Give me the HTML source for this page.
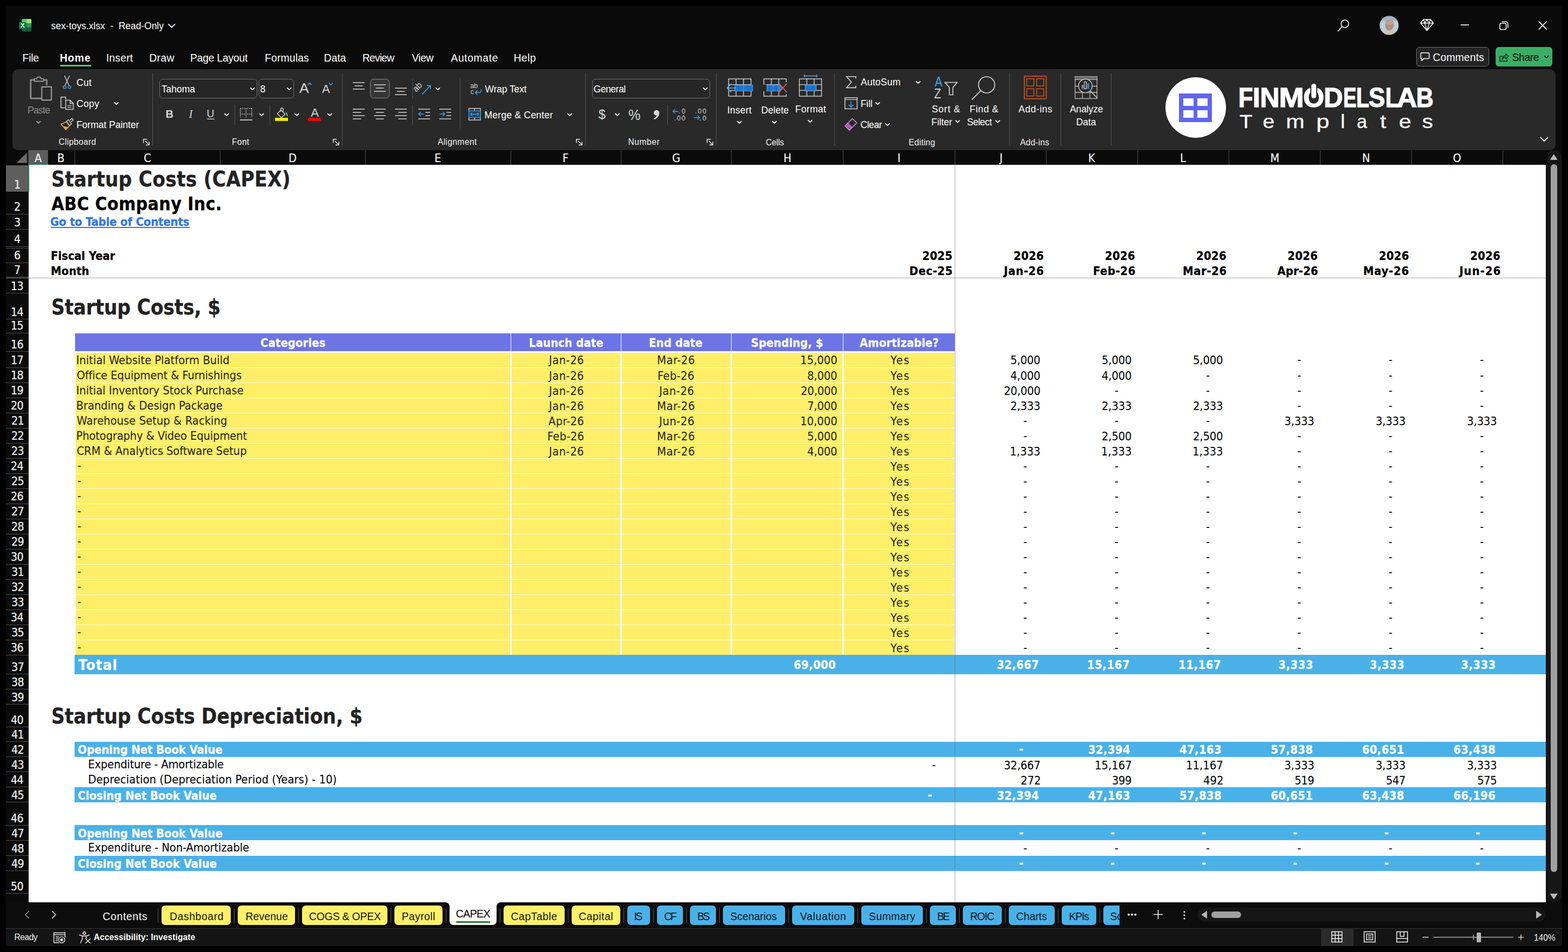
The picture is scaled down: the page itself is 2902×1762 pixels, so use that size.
<!DOCTYPE html>
<html lang="en">
<head>
<meta charset="utf-8">
<title>sex-toys.xlsx - Read-Only - Excel</title>
<style>
html,body{margin:0;padding:0;background:#000;}
body{width:2902px;height:1762px;position:relative;overflow:hidden;font-family:"Liberation Sans",sans-serif;}
#app{position:absolute;left:0;top:0;width:2902px;height:1762px;overflow:hidden;}
#app div,#app svg,#app .t{position:absolute;}
.t{white-space:pre;margin:0;padding:0;display:block;font-kerning:normal;font-weight:400;text-decoration:none;transform-origin:0 0;}
svg{overflow:visible;}
.g{display:inline-block;width:0;transform-origin:0 0;white-space:pre;}

</style>
</head>
<body>
<div id="app">
<div style="left:11px;top:11px;width:2880px;height:1740px;background:#0A0A0A;"></div>
<div style="left:53px;top:305px;width:2808px;height:1365px;background:#FFFFFF;"></div>
<div style="left:11px;top:278px;width:2850px;height:27px;background:#0A0A0A;"></div>
<div style="left:53px;top:278px;width:36px;height:26px;background:#5E5E5E;"></div>
<div style="left:88px;top:279px;width:1px;height:26px;background:#4D4D4D;"></div>
<div style="left:138px;top:279px;width:1px;height:26px;background:#4D4D4D;"></div>
<div style="left:407px;top:279px;width:1px;height:26px;background:#4D4D4D;"></div>
<div style="left:676px;top:279px;width:1px;height:26px;background:#4D4D4D;"></div>
<div style="left:945px;top:279px;width:1px;height:26px;background:#4D4D4D;"></div>
<div style="left:1149px;top:279px;width:1px;height:26px;background:#4D4D4D;"></div>
<div style="left:1353px;top:279px;width:1px;height:26px;background:#4D4D4D;"></div>
<div style="left:1560px;top:279px;width:1px;height:26px;background:#4D4D4D;"></div>
<div style="left:1767px;top:279px;width:1px;height:26px;background:#4D4D4D;"></div>
<div style="left:1936px;top:279px;width:1px;height:26px;background:#4D4D4D;"></div>
<div style="left:2105px;top:279px;width:1px;height:26px;background:#4D4D4D;"></div>
<div style="left:2274px;top:279px;width:1px;height:26px;background:#4D4D4D;"></div>
<div style="left:2443px;top:279px;width:1px;height:26px;background:#4D4D4D;"></div>
<div style="left:2612px;top:279px;width:1px;height:26px;background:#4D4D4D;"></div>
<div style="left:2781px;top:279px;width:1px;height:26px;background:#4D4D4D;"></div>
<div style="left:52px;top:279px;width:1px;height:26px;background:#4D4D4D;"></div>
<div style="left:11px;top:306px;width:42px;height:1364px;background:#0A0A0A;"></div>
<div style="left:11px;top:306px;width:42px;height:48px;background:#5E5E5E;"></div>
<div style="left:11px;top:354px;width:42px;height:1px;background:#4D4D4D;"></div>
<div style="left:11px;top:396px;width:42px;height:1px;background:#4D4D4D;"></div>
<div style="left:11px;top:424px;width:42px;height:1px;background:#4D4D4D;"></div>
<div style="left:11px;top:456px;width:42px;height:1px;background:#4D4D4D;"></div>
<div style="left:11px;top:486px;width:42px;height:1px;background:#4D4D4D;"></div>
<div style="left:11px;top:512px;width:42px;height:1px;background:#4D4D4D;"></div>
<div style="left:11px;top:542px;width:42px;height:1px;background:#4D4D4D;"></div>
<div style="left:11px;top:590px;width:42px;height:1px;background:#4D4D4D;"></div>
<div style="left:11px;top:616px;width:42px;height:1px;background:#4D4D4D;"></div>
<div style="left:11px;top:650px;width:42px;height:1px;background:#4D4D4D;"></div>
<div style="left:11px;top:680px;width:42px;height:1px;background:#4D4D4D;"></div>
<div style="left:11px;top:708px;width:42px;height:1px;background:#4D4D4D;"></div>
<div style="left:11px;top:736px;width:42px;height:1px;background:#4D4D4D;"></div>
<div style="left:11px;top:764px;width:42px;height:1px;background:#4D4D4D;"></div>
<div style="left:11px;top:792px;width:42px;height:1px;background:#4D4D4D;"></div>
<div style="left:11px;top:820px;width:42px;height:1px;background:#4D4D4D;"></div>
<div style="left:11px;top:848px;width:42px;height:1px;background:#4D4D4D;"></div>
<div style="left:11px;top:876px;width:42px;height:1px;background:#4D4D4D;"></div>
<div style="left:11px;top:904px;width:42px;height:1px;background:#4D4D4D;"></div>
<div style="left:11px;top:932px;width:42px;height:1px;background:#4D4D4D;"></div>
<div style="left:11px;top:960px;width:42px;height:1px;background:#4D4D4D;"></div>
<div style="left:11px;top:988px;width:42px;height:1px;background:#4D4D4D;"></div>
<div style="left:11px;top:1016px;width:42px;height:1px;background:#4D4D4D;"></div>
<div style="left:11px;top:1044px;width:42px;height:1px;background:#4D4D4D;"></div>
<div style="left:11px;top:1072px;width:42px;height:1px;background:#4D4D4D;"></div>
<div style="left:11px;top:1100px;width:42px;height:1px;background:#4D4D4D;"></div>
<div style="left:11px;top:1128px;width:42px;height:1px;background:#4D4D4D;"></div>
<div style="left:11px;top:1156px;width:42px;height:1px;background:#4D4D4D;"></div>
<div style="left:11px;top:1184px;width:42px;height:1px;background:#4D4D4D;"></div>
<div style="left:11px;top:1212px;width:42px;height:1px;background:#4D4D4D;"></div>
<div style="left:11px;top:1247px;width:42px;height:1px;background:#4D4D4D;"></div>
<div style="left:11px;top:1275px;width:42px;height:1px;background:#4D4D4D;"></div>
<div style="left:11px;top:1303px;width:42px;height:1px;background:#4D4D4D;"></div>
<div style="left:11px;top:1345px;width:42px;height:1px;background:#4D4D4D;"></div>
<div style="left:11px;top:1372px;width:42px;height:1px;background:#4D4D4D;"></div>
<div style="left:11px;top:1400px;width:42px;height:1px;background:#4D4D4D;"></div>
<div style="left:11px;top:1428px;width:42px;height:1px;background:#4D4D4D;"></div>
<div style="left:11px;top:1456px;width:42px;height:1px;background:#4D4D4D;"></div>
<div style="left:11px;top:1484px;width:42px;height:1px;background:#4D4D4D;"></div>
<div style="left:11px;top:1527px;width:42px;height:1px;background:#4D4D4D;"></div>
<div style="left:11px;top:1555px;width:42px;height:1px;background:#4D4D4D;"></div>
<div style="left:11px;top:1583px;width:42px;height:1px;background:#4D4D4D;"></div>
<div style="left:11px;top:1611px;width:42px;height:1px;background:#4D4D4D;"></div>
<div style="left:11px;top:1653px;width:42px;height:1px;background:#4D4D4D;"></div>
<div style="left:11px;top:459px;width:42px;height:1px;background:#4D4D4D;"></div>
<div style="left:11px;top:514px;width:42px;height:1px;background:#8A8A8A;"></div>
<div style="left:94px;top:420px;width:256.5px;height:1.7px;background:#2F76EC;"></div>
<div style="left:139.3px;top:617px;width:1627.7px;height:33px;background:#6D74E6;"></div>
<div style="left:944.7px;top:617px;width:1.6px;height:33px;background:#FFFFFF;"></div>
<div style="left:1148.7px;top:617px;width:1.6px;height:33px;background:#FFFFFF;"></div>
<div style="left:1352.7px;top:617px;width:1.6px;height:33px;background:#FFFFFF;"></div>
<div style="left:1559.7px;top:617px;width:1.6px;height:33px;background:#FFFFFF;"></div>
<div style="left:140px;top:653px;width:1626.3px;height:559.3px;background:#FFEF68;"></div>
<div style="left:140px;top:679.55px;width:1626.3px;height:1.6px;background:#FFFCE6;"></div>
<div style="left:140px;top:707.55px;width:1626.3px;height:1.6px;background:#FFFCE6;"></div>
<div style="left:140px;top:735.55px;width:1626.3px;height:1.6px;background:#FFFCE6;"></div>
<div style="left:140px;top:763.55px;width:1626.3px;height:1.6px;background:#FFFCE6;"></div>
<div style="left:140px;top:791.55px;width:1626.3px;height:1.6px;background:#FFFCE6;"></div>
<div style="left:140px;top:819.55px;width:1626.3px;height:1.6px;background:#FFFCE6;"></div>
<div style="left:140px;top:847.55px;width:1626.3px;height:1.6px;background:#FFFCE6;"></div>
<div style="left:140px;top:875.55px;width:1626.3px;height:1.6px;background:#FFFCE6;"></div>
<div style="left:140px;top:903.55px;width:1626.3px;height:1.6px;background:#FFFCE6;"></div>
<div style="left:140px;top:931.55px;width:1626.3px;height:1.6px;background:#FFFCE6;"></div>
<div style="left:140px;top:959.55px;width:1626.3px;height:1.6px;background:#FFFCE6;"></div>
<div style="left:140px;top:987.55px;width:1626.3px;height:1.6px;background:#FFFCE6;"></div>
<div style="left:140px;top:1015.55px;width:1626.3px;height:1.6px;background:#FFFCE6;"></div>
<div style="left:140px;top:1043.55px;width:1626.3px;height:1.6px;background:#FFFCE6;"></div>
<div style="left:140px;top:1071.55px;width:1626.3px;height:1.6px;background:#FFFCE6;"></div>
<div style="left:140px;top:1099.55px;width:1626.3px;height:1.6px;background:#FFFCE6;"></div>
<div style="left:140px;top:1127.55px;width:1626.3px;height:1.6px;background:#FFFCE6;"></div>
<div style="left:140px;top:1155.55px;width:1626.3px;height:1.6px;background:#FFFCE6;"></div>
<div style="left:140px;top:1183.55px;width:1626.3px;height:1.6px;background:#FFFCE6;"></div>
<div style="left:943.8px;top:651px;width:3.4px;height:561.3px;background:#FFFFFF;"></div>
<div style="left:1147.8px;top:651px;width:3.4px;height:561.3px;background:#FFFFFF;"></div>
<div style="left:1351.8px;top:651px;width:3.4px;height:561.3px;background:#FFFFFF;"></div>
<div style="left:1558.8px;top:651px;width:3.4px;height:561.3px;background:#FFFFFF;"></div>
<div style="left:138px;top:1212px;width:2723px;height:36px;background:#4AB1E8;"></div>
<div style="left:138px;top:1373px;width:2723px;height:28px;background:#4AB1E8;"></div>
<div style="left:138px;top:1457px;width:2723px;height:28.4px;background:#4AB1E8;"></div>
<div style="left:138px;top:1527.3px;width:2723px;height:27.7px;background:#4AB1E8;"></div>
<div style="left:138px;top:1583.6px;width:2723px;height:28px;background:#4AB1E8;"></div>
<div style="left:111px;top:120px;width:58px;height:3px;background:#5FC08C;border-radius:1.5px;"></div>
<div style="left:2621.3px;top:87.2px;width:134.7px;height:35.6px;background:#242424;border:1px solid #6E6E6E;border-radius:6px;box-sizing:border-box;"></div>
<div style="left:2768px;top:87.2px;width:105px;height:35.6px;background:#3BAE66;border-radius:6px;"></div>
<div style="left:23px;top:128px;width:2856px;height:149.8px;background:#292929;border-radius:11px;"></div>
<div style="left:282px;top:135px;width:1px;height:134px;background:#545454;"></div>
<div style="left:633px;top:135px;width:1px;height:134px;background:#545454;"></div>
<div style="left:1083px;top:135px;width:1px;height:134px;background:#545454;"></div>
<div style="left:1325px;top:135px;width:1px;height:134px;background:#545454;"></div>
<div style="left:1544px;top:135px;width:1px;height:134px;background:#545454;"></div>
<div style="left:1868px;top:135px;width:1px;height:134px;background:#545454;"></div>
<div style="left:1963px;top:135px;width:1px;height:134px;background:#545454;"></div>
<div style="left:2056px;top:135px;width:1px;height:134px;background:#545454;"></div>
<div style="left:434px;top:194px;width:1px;height:36.5px;background:#545454;"></div>
<div style="left:499px;top:194px;width:1px;height:36.5px;background:#545454;"></div>
<div style="left:763px;top:146px;width:1px;height:36px;background:#545454;"></div>
<div style="left:763px;top:194px;width:1px;height:36.5px;background:#545454;"></div>
<div style="left:851px;top:144px;width:1px;height:94px;background:#545454;"></div>
<div style="left:1235px;top:194px;width:1px;height:36.5px;background:#545454;"></div>
<div style="left:295px;top:146px;width:181px;height:36px;background:#262626;border:1px solid #707070;border-radius:6px;box-sizing:border-box;"></div>
<div style="left:479px;top:146px;width:65px;height:36px;background:#262626;border:1px solid #707070;border-radius:6px;box-sizing:border-box;"></div>
<div style="left:685px;top:146px;width:35.6px;height:36px;background:#363636;border:1px solid #8C8C8C;border-radius:6.500px;box-sizing:border-box;"></div>
<div style="left:1096px;top:146px;width:218px;height:36px;background:#262626;border:1px solid #707070;border-radius:6px;box-sizing:border-box;"></div>
<div style="left:2156.6px;top:142.9px;width:112px;height:112px;background:#FFFFFF;border-radius:50%;"></div>
<div style="left:2182px;top:173px;width:61px;height:52.8px;background:#6166F0;"></div>
<div style="left:2190px;top:181.7px;width:18.9px;height:14px;background:#FFFFFF;"></div>
<div style="left:2190px;top:203.5px;width:18.9px;height:14px;background:#FFFFFF;"></div>
<div style="left:2216.1px;top:181.7px;width:18.9px;height:14px;background:#FFFFFF;"></div>
<div style="left:2216.1px;top:203.5px;width:18.9px;height:14px;background:#FFFFFF;"></div>
<div style="left:820px;top:1669px;width:112px;height:12px;background:#FFFFFF;"></div>
<div style="left:11px;top:1670px;width:821px;height:48px;background:#0C0C0C;border-radius:0 8px 0 0;"></div>
<div style="left:919.2px;top:1670px;width:1971.8px;height:48px;background:#0C0C0C;border-radius:8px 0 0 0;"></div>
<div style="left:11px;top:1718px;width:2880px;height:33px;background:#141414;"></div>
<div style="left:11px;top:1717.5px;width:2880px;height:1px;background:#333333;"></div>
<div style="left:292px;top:1681px;width:1px;height:27px;background:#5A5A5A;"></div>
<div style="left:433px;top:1681px;width:1px;height:27px;background:#5A5A5A;"></div>
<div style="left:552px;top:1681px;width:1px;height:27px;background:#5A5A5A;"></div>
<div style="left:723px;top:1681px;width:1px;height:27px;background:#5A5A5A;"></div>
<div style="left:825px;top:1681px;width:1px;height:27px;background:#5A5A5A;"></div>
<div style="left:925px;top:1681px;width:1px;height:27px;background:#5A5A5A;"></div>
<div style="left:1051px;top:1681px;width:1px;height:27px;background:#5A5A5A;"></div>
<div style="left:1154px;top:1681px;width:1px;height:27px;background:#5A5A5A;"></div>
<div style="left:1209px;top:1681px;width:1px;height:27px;background:#5A5A5A;"></div>
<div style="left:1270px;top:1681px;width:1px;height:27px;background:#5A5A5A;"></div>
<div style="left:1331px;top:1681px;width:1px;height:27px;background:#5A5A5A;"></div>
<div style="left:1459px;top:1681px;width:1px;height:27px;background:#5A5A5A;"></div>
<div style="left:1587px;top:1681px;width:1px;height:27px;background:#5A5A5A;"></div>
<div style="left:1714px;top:1681px;width:1px;height:27px;background:#5A5A5A;"></div>
<div style="left:1775px;top:1681px;width:1px;height:27px;background:#5A5A5A;"></div>
<div style="left:1860px;top:1681px;width:1px;height:27px;background:#5A5A5A;"></div>
<div style="left:1958px;top:1681px;width:1px;height:27px;background:#5A5A5A;"></div>
<div style="left:2035px;top:1681px;width:1px;height:27px;background:#5A5A5A;"></div>
<div style="left:299px;top:1676px;width:128px;height:35.6px;background:#FFF06A;border-radius:6.500px;"></div>
<div style="left:440.3px;top:1676px;width:105.6px;height:35.6px;background:#FFF06A;border-radius:6.500px;"></div>
<div style="left:558.8px;top:1676px;width:158.3px;height:35.6px;background:#FFF06A;border-radius:6.500px;"></div>
<div style="left:729.7px;top:1676px;width:89.3px;height:35.6px;background:#FFF06A;border-radius:6.500px;"></div>
<div style="left:932px;top:1676px;width:112.6px;height:35.6px;background:#FFF06A;border-radius:6.500px;"></div>
<div style="left:1058px;top:1676px;width:90px;height:35.6px;background:#FFF06A;border-radius:6.500px;"></div>
<div style="left:1161px;top:1676px;width:42px;height:35.6px;background:#4AB1E8;border-radius:6.500px;"></div>
<div style="left:1216px;top:1676px;width:47.8px;height:35.6px;background:#4AB1E8;border-radius:6.500px;"></div>
<div style="left:1277px;top:1676px;width:47.7px;height:35.6px;background:#4AB1E8;border-radius:6.500px;"></div>
<div style="left:1338px;top:1676px;width:114.5px;height:35.6px;background:#4AB1E8;border-radius:6.500px;"></div>
<div style="left:1466px;top:1676px;width:115px;height:35.6px;background:#4AB1E8;border-radius:6.500px;"></div>
<div style="left:1593.8px;top:1676px;width:114.2px;height:35.6px;background:#4AB1E8;border-radius:6.500px;"></div>
<div style="left:1721px;top:1676px;width:48px;height:35.6px;background:#4AB1E8;border-radius:6.500px;"></div>
<div style="left:1782px;top:1676px;width:72px;height:35.6px;background:#4AB1E8;border-radius:6.500px;"></div>
<div style="left:1867px;top:1676px;width:84.7px;height:35.6px;background:#4AB1E8;border-radius:6.500px;"></div>
<div style="left:1965px;top:1676px;width:64px;height:35.6px;background:#4AB1E8;border-radius:6.500px;"></div>
<div style="left:2042px;top:1676px;width:30px;height:35.6px;background:#4AB1E8;border-radius:6.500px 0 0 6.500px;overflow:hidden;"><span class="t" style="left:12.500px;top:9px;font-size:19.4px;line-height:22px;color:#141414;letter-spacing:-0.300px">Sc</span></div>
<div style="left:832px;top:1669px;width:87.2px;height:43px;background:linear-gradient(#FFFFFF 0%,#FFFFFF 25%,#FFFBE8 100%);border-radius:0 0 7px 7px;"></div>
<div style="left:844px;top:1705px;width:63px;height:2.6px;background:#1E7B45;border-radius:1.300px;"></div>
<div style="left:2216.4px;top:1680px;width:644px;height:26px;background:#161616;border-radius:13px;"></div>
<div style="left:2241.6px;top:1687px;width:55.7px;height:12.4px;background:#A0A0A0;border-radius:6.200px;"></div>
<div style="left:2862.5px;top:278px;width:27px;height:1392px;background:#161616;border-radius:13px;"></div>
<div style="left:2870px;top:303.5px;width:12.2px;height:1310.5px;background:#A0A0A0;border-radius:6.100px;"></div>
<div style="left:2445px;top:1718.5px;width:60px;height:32.5px;background:#2B2B2B;"></div>
<div style="left:2733px;top:1726px;width:8px;height:17.5px;background:#B4B4B4;border-radius:1.500px;"></div>
<svg style="left:30px;top:282px;" width="20" height="20" viewBox="0 0 20 20"><path d="M20 0.5V19.5H0.5Z" fill="#6B6B6B"/></svg>
<div style="left:52px;top:303.6px;width:37.5px;height:1.9px;background:#1F7A47;"></div>
<div style="left:52px;top:304px;width:1.8px;height:51px;background:#1F7A47;"></div>
<svg style="left:0;top:0" width="2902" height="1762" viewBox="0 0 2902 1762"><g>
<rect x="40.5" y="35" width="17.6" height="23.4" rx="2.2" fill="#185C37"/>
<path d="M40.5 37.2a2.2 2.2 0 0 1 2.2-2.2h6.6v8.2h-8.8z" fill="#5FCB6A"/>
<path d="M49.3 35h6.6a2.2 2.2 0 0 1 2.2 2.2v6h-8.8z" fill="#A6E36E"/>
<rect x="49.3" y="43.2" width="8.8" height="7.6" fill="#2E9A55"/>
<rect x="40.5" y="43.2" width="8.8" height="7.6" fill="#1E7A45"/>
<rect x="35.4" y="40.8" width="13.2" height="13.2" rx="1.6" fill="#107C41"/>
</g>
<polyline points="311.81,44.84 317.75,50.69 323.69,44.84" fill="none" stroke="#FFFFFF" stroke-width="1.8" stroke-linecap="round" stroke-linejoin="round"/>
<circle cx="2489" cy="44" r="7" fill="none" stroke="#fff" stroke-width="1.6"/><path d="M2484 49.3L2476.6 57.4" stroke="#fff" stroke-width="1.7" stroke-linecap="round"/>
<defs><clipPath id="av"><circle cx="2571" cy="47" r="18"/></clipPath></defs>
<g clip-path="url(#av)"><rect x="2553" y="29" width="36" height="36" fill="#B9CFD6"/>
<rect x="2553" y="29" width="36" height="10" fill="#9FB4C8"/>
<ellipse cx="2571.5" cy="46" rx="8" ry="10.5" fill="#B08F7C"/>
<ellipse cx="2571.5" cy="41" rx="7.5" ry="5.5" fill="#BFA190"/>
<path d="M2555 66c2-7 8-9 16.5-9s14.5 2 16.500 9z" fill="#CFC6B8"/>
</g><circle cx="2571" cy="47" r="18" fill="none" stroke="#1a1a1a" stroke-width="1"/>
<path d="M2634.500 36h13l5.300 6.800-11.800 13.800-11.800-13.800zM2629.400 42.800h23.400M2636.800 42.800l4.200 13.600 4.200-13.600M2634.500 36l2.400 6.800 4.100-6.800 4.100 6.800 2.400-6.800" fill="none" stroke="#fff" stroke-width="1.5" stroke-linejoin="round"/>
<path d="M2703.400 46h15.500" stroke="#fff" stroke-width="1.6"/>
<rect x="2776" y="43" width="11.500" height="11.500" rx="2.600" fill="none" stroke="#fff" stroke-width="1.6"/><path d="M2779.500 40.200h7.200a4 4 0 0 1 4 4v7.300" fill="none" stroke="#fff" stroke-width="1.6"/>
<path d="M2847.600 39.600l15 15M2862.600 39.600l-15 15" stroke="#fff" stroke-width="1.6"/>
<path d="M2630.500 97.800h13.500a1 1 0 0 1 1 1v8.600a1 1 0 0 1-1 1h-8.800l-4 3.800v-3.800h-0.700a1 1 0 0 1-1-1v-8.600a1 1 0 0 1 1-1z" fill="none" stroke="#fff" stroke-width="1.5" stroke-linejoin="round"/>
<path d="M2780.800 104.300h-4.800v9h13.200v-3.400" fill="none" stroke="#0b2a17" stroke-width="1.500" stroke-linejoin="round"/><path d="M2780.300 110.300c0.400-4.600 2.600-7.200 6.600-7.500v-3.400l4.800 4.800-4.800 4.800v-3.300c-2.800 0-4.800 1.500-6.600 4.600z" fill="none" stroke="#0b2a17" stroke-width="1.400" stroke-linejoin="round"/>
<polyline points="2858.76,103.71 2862.25,107.235 2865.74,103.71" fill="none" stroke="#0A0A0A" stroke-width="1.7" stroke-linecap="round" stroke-linejoin="round"/>
<path d="M272.3 257.8H265.6V264.5" fill="none" stroke="#E8E8E8" stroke-width="1.5"/><path d="M268.8 261L275.8 268M276.1 262.2V268.3H270" fill="none" stroke="#E8E8E8" stroke-width="1.5"/>
<path d="M623.4 257.8H616.7V264.5" fill="none" stroke="#E8E8E8" stroke-width="1.5"/><path d="M619.9 261L626.9 268M627.2 262.2V268.3H621.1" fill="none" stroke="#E8E8E8" stroke-width="1.5"/>
<path d="M1073.5 257.8H1066.8V264.5" fill="none" stroke="#E8E8E8" stroke-width="1.5"/><path d="M1070 261L1077 268M1077.3 262.2V268.3H1071.2" fill="none" stroke="#E8E8E8" stroke-width="1.5"/>
<path d="M1315.5 257.8H1308.8V264.5" fill="none" stroke="#E8E8E8" stroke-width="1.5"/><path d="M1312 261L1319 268M1319.3 262.2V268.3H1313.2" fill="none" stroke="#E8E8E8" stroke-width="1.5"/>
<g fill="none" stroke-linejoin="round">
<path d="M63.500 147.800h-6.700v34.400h20" stroke="#8E8E8E" stroke-width="2.800"/>
<path d="M80 147.800h6.300v10" stroke="#8E8E8E" stroke-width="2.800"/>
<path d="M63.500 150.500v-4.800h4.300a4.300 4.300 0 0 1 8.400 0h4.300v4.800z" stroke="#9A9A9A" stroke-width="1.800"/>
<rect x="77.300" y="160.800" width="17.800" height="24.400" fill="#292929" stroke="#A6A6A6" stroke-width="1.900"/>
</g>
<polyline points="67.81,224.54 71.35,227.99 74.89,224.54" fill="none" stroke="#8C8C8C" stroke-width="1.8" stroke-linecap="round" stroke-linejoin="round"/>
<g fill="none">
<path d="M119.600 140.500L127.400 157.500M128.400 140.500L120.600 157.500" stroke="#D6D6D6" stroke-width="1.400" stroke-linecap="round"/>
<circle cx="119.500" cy="161.200" r="2.500" stroke="#3C9BE3" stroke-width="1.600"/><circle cx="128.500" cy="161.200" r="2.500" stroke="#3C9BE3" stroke-width="1.600"/>
</g>
<g fill="none" stroke="#D6D6D6" stroke-width="1.500" stroke-linejoin="round">
<path d="M121.500 184.500v-4.700h-8.700v19.600h7.500"/>
<path d="M121.600 185.600h8.200l5.800 5.800v11.200h-14z"/><path d="M129.800 185.600v5.800h5.800"/>
<path d="M125 195.400h7.300M125 198.600h7.300" stroke-width="1.300"/>
</g>
<polyline points="211.81,189.84 215.3,193.19 218.79,189.84" fill="none" stroke="#FFFFFF" stroke-width="1.8" stroke-linecap="round" stroke-linejoin="round"/>
<g stroke-linejoin="round">
<path d="M129 222.500l4.300-3.300 2.300 3-4.300 3.400" fill="none" stroke="#D6D6D6" stroke-width="1.400"/>
<path d="M122.500 224.800l4-3 5.800 7.600-4 3z" fill="none" stroke="#D6D6D6" stroke-width="1.400"/>
<path d="M112.800 229.700l10.800-4.300 5.300 7-7 7.400z" fill="none" stroke="#F2B64B" stroke-width="1.500"/>
<path d="M116.700 234l9.700 1.800-5 4.700z" fill="#E9A13B" stroke="#E9A13B" stroke-width="1"/>
</g>
<polyline points="463.81,162.84 467.25,166.19 470.69,162.84" fill="none" stroke="#FFFFFF" stroke-width="1.8" stroke-linecap="round" stroke-linejoin="round"/>
<polyline points="531.81,162.84 535.25,166.19 538.69,162.84" fill="none" stroke="#FFFFFF" stroke-width="1.8" stroke-linecap="round" stroke-linejoin="round"/>
<polyline points="569.500,157.300 573,153.600 576.500,157.300" fill="none" stroke="#3C9BE3" stroke-width="1.700"/>
<polyline points="608.800,153.600 612.300,157.300 615.800,153.600" fill="none" stroke="#3C9BE3" stroke-width="1.700"/>
<path d="M383.2 220.3H397" stroke="#D6D6D6" stroke-width="1.4"/>
<polyline points="415.71,210.54 419.3,213.89 422.89,210.54" fill="none" stroke="#FFFFFF" stroke-width="1.8" stroke-linecap="round" stroke-linejoin="round"/>
<g fill="none" stroke="#D6D6D6">
<path d="M444.800 200.700H466.200M444.800 200.700V217.500M466.200 200.700V217.500M455.500 200.700V217.500M444.800 211.300H466.200" stroke-width="1.500" stroke-dasharray="1.500 1.700"/>
<path d="M444 222H467" stroke-width="1.700"/></g>
<polyline points="480.61,210.54 484.25,213.89 487.89,210.54" fill="none" stroke="#FFFFFF" stroke-width="1.8" stroke-linecap="round" stroke-linejoin="round"/>
<g fill="none" stroke-linejoin="round">
<path d="M519.800 203.400l8 8-7.200 6.300-7.300-7.300z" stroke="#D6D6D6" stroke-width="1.400"/>
<path d="M519.500 206.500v-4.200a2.300 2.300 0 0 1 4.600 0v4.800" stroke="#D6D6D6" stroke-width="1.300"/>
<path d="M528.500 208.500c2.300 1 3.300 3.300 2.800 6.700" stroke="#6FB7F0" stroke-width="1.800"/></g>
<rect x="509" y="218" width="24" height="5.800" fill="#FFF100"/>
<polyline points="545.71,210.54 549.25,213.89 552.79,210.54" fill="none" stroke="#FFFFFF" stroke-width="1.8" stroke-linecap="round" stroke-linejoin="round"/>
<rect x="570" y="218" width="24" height="5.800" fill="#FF0000"/>
<polyline points="606.81,210.54 610.4,213.89 613.99,210.54" fill="none" stroke="#FFFFFF" stroke-width="1.8" stroke-linecap="round" stroke-linejoin="round"/>
<path d="M653 152.9H674.8" stroke="#D6D6D6" stroke-width="1.5"/><path d="M656.6 158.9H671.2" stroke="#D6D6D6" stroke-width="1.5"/><path d="M653 164.9H674.8" stroke="#D6D6D6" stroke-width="1.5"/>
<path d="M692 157H714" stroke="#D6D6D6" stroke-width="1.5"/><path d="M695.6 163H710.4" stroke="#D6D6D6" stroke-width="1.5"/><path d="M692 169H714" stroke="#D6D6D6" stroke-width="1.5"/>
<path d="M731 163.2H752.8" stroke="#D6D6D6" stroke-width="1.5"/><path d="M734.6 169.2H749.2" stroke="#D6D6D6" stroke-width="1.5"/><path d="M731 175.2H752.8" stroke="#D6D6D6" stroke-width="1.5"/>
<path d="M653 202H674.8" stroke="#D6D6D6" stroke-width="1.5"/><path d="M653 208H668.6" stroke="#D6D6D6" stroke-width="1.5"/><path d="M653 214H674.8" stroke="#D6D6D6" stroke-width="1.5"/><path d="M653 220H668.6" stroke="#D6D6D6" stroke-width="1.5"/>
<path d="M692 202H714" stroke="#D6D6D6" stroke-width="1.5"/><path d="M695.6 208H710.4" stroke="#D6D6D6" stroke-width="1.5"/><path d="M692 214H714" stroke="#D6D6D6" stroke-width="1.5"/><path d="M695.6 220H710.4" stroke="#D6D6D6" stroke-width="1.5"/>
<path d="M731 202H752.8" stroke="#D6D6D6" stroke-width="1.5"/><path d="M737.2 208H752.8" stroke="#D6D6D6" stroke-width="1.5"/><path d="M731 214H752.8" stroke="#D6D6D6" stroke-width="1.5"/><path d="M737.2 220H752.8" stroke="#D6D6D6" stroke-width="1.5"/>
<path d="M774 202H796" stroke="#D6D6D6" stroke-width="1.5"/><path d="M787.4 208H796" stroke="#D6D6D6" stroke-width="1.5"/><path d="M787.4 214H796" stroke="#D6D6D6" stroke-width="1.5"/><path d="M774 220H796" stroke="#D6D6D6" stroke-width="1.5"/>
<path d="M775 211H784.600M779 207l-4 4 4 4" fill="none" stroke="#3C9BE3" stroke-width="1.700"/>
<path d="M813 202H835" stroke="#D6D6D6" stroke-width="1.5"/><path d="M826.4 208H835" stroke="#D6D6D6" stroke-width="1.5"/><path d="M826.4 214H835" stroke="#D6D6D6" stroke-width="1.5"/><path d="M813 220H835" stroke="#D6D6D6" stroke-width="1.5"/>
<path d="M813.500 211H823.300M819.300 207l4 4-4 4" fill="none" stroke="#3C9BE3" stroke-width="1.700"/>
<path d="M781.500 174.300L796.300 158.600M789.800 158.300h6.800v6.800" fill="none" stroke="#3C9BE3" stroke-width="1.700"/>
<polyline points="806.81,162.84 810.3,166.19 813.79,162.84" fill="none" stroke="#FFFFFF" stroke-width="1.8" stroke-linecap="round" stroke-linejoin="round"/>
<path d="M890.500 165.300v2.500a3.400 3.400 0 0 1-3.400 3.400h-7.300M883.600 167.300l-3.900 3.900 3.900 3.900" fill="none" stroke="#3C9BE3" stroke-width="1.700"/>
<rect x="867.700" y="200.700" width="21.400" height="21.400" fill="none" stroke="#D6D6D6" stroke-width="1.400"/>
<path d="M878.400 200.700v4.500M878.400 217.600v4.500" stroke="#D6D6D6" stroke-width="1.400"/>
<rect x="867.700" y="205.200" width="21.400" height="12.400" fill="#2B3F55" stroke="#3C9BE3" stroke-width="1.400"/>
<path d="M871 211.400h14.800M874 208.400l-3 3 3 3M882.800 208.400l3 3-3 3" fill="none" stroke="#3C9BE3" stroke-width="1.500"/>
<polyline points="1050.81,210.54 1054.45,213.89 1058.09,210.54" fill="none" stroke="#FFFFFF" stroke-width="1.8" stroke-linecap="round" stroke-linejoin="round"/>
<polyline points="1301.81,162.84 1305.3,166.19 1308.79,162.84" fill="none" stroke="#FFFFFF" stroke-width="1.8" stroke-linecap="round" stroke-linejoin="round"/>
<polyline points="1138.81,210.54 1142.5,213.89 1146.19,210.54" fill="none" stroke="#FFFFFF" stroke-width="1.8" stroke-linecap="round" stroke-linejoin="round"/>
<path d="M1215 203.700a5.200 5.200 0 0 1 5.300 5.400c0 5.400-3.600 10-9.600 12.300l-0.900-1.700c3-1.500 4.900-3.600 5.500-5.900a4.800 4.800 0 0 1-5.300-4.800 5 5 0 0 1 5-5.300z" fill="#D6D6D6"/>
<path d="M1245.500 206.200H1256M1249.500 202.300l-3.900 3.900 3.900 3.900" fill="none" stroke="#3C9BE3" stroke-width="1.600"/>
<path d="M1284.300 217.800H1294.800M1290.800 213.900l3.900 3.900-3.900 3.900" fill="none" stroke="#3C9BE3" stroke-width="1.600"/>
<g fill="none" stroke="#D6D6D6" stroke-width="1.400"><rect x="1348.5" y="146" width="41.5" height="32"/><path d="M1362.33 146v32M1376.17 146v32M1348.5 156.667h41.5M1348.5 167.333h41.5"/></g>
<rect x="1360" y="157.300" width="33" height="11" fill="#1B74C9" stroke="#57A9EC" stroke-width="1"/>
<path d="M1376.500 157.300v11" stroke="#57A9EC" stroke-width="1"/>
<path d="M1346 162.800h16.500M1353.500 154.800l-8 8 8 8" fill="none" stroke="#57A9EC" stroke-width="1.700"/>
<polyline points="1364.81,224.54 1368.35,227.99 1371.89,224.54" fill="none" stroke="#FFFFFF" stroke-width="1.8" stroke-linecap="round" stroke-linejoin="round"/>
<g fill="none" stroke="#D6D6D6" stroke-width="1.400"><rect x="1413.7" y="146" width="41.5" height="32"/><path d="M1427.53 146v32M1441.37 146v32M1413.7 156.667h41.5M1413.7 167.333h41.5"/></g>
<rect x="1412.500" y="156.500" width="6" height="12.500" fill="#292929"/><rect x="1442" y="152" width="16" height="22" fill="#292929"/>
<rect x="1419.500" y="157.300" width="23" height="11" fill="#1B74C9" stroke="#57A9EC" stroke-width="1"/>
<path d="M1431 157.300v11" stroke="#57A9EC" stroke-width="1"/>
<path d="M1442.500 157.300l5 5.500-5 5.500z" fill="#1B74C9" stroke="#57A9EC" stroke-width="1"/>
<path d="M1441.500 154.500l15 16.500M1456.500 154.500l-15 16.500" stroke="#E5574F" stroke-width="1.800"/>
<polyline points="1429.61,224.54 1433.15,227.99 1436.69,224.54" fill="none" stroke="#FFFFFF" stroke-width="1.8" stroke-linecap="round" stroke-linejoin="round"/>
<g fill="none" stroke="#D6D6D6" stroke-width="1.400"><rect x="1479.5" y="146" width="41" height="32"/><path d="M1493.17 146v32M1506.83 146v32M1479.5 156.667h41M1479.5 167.333h41"/></g>
<rect x="1490.500" y="157" width="20" height="11" fill="#1B74C9" stroke="#57A9EC" stroke-width="1.300"/>
<path d="M1488.500 140.500h23M1488.500 138v5M1511.500 138v5" stroke="#57A9EC" stroke-width="1.600" fill="none"/>
<polyline points="1495.81,222.54 1499.3,226.19 1502.79,222.54" fill="none" stroke="#FFFFFF" stroke-width="1.8" stroke-linecap="round" stroke-linejoin="round"/>
<path d="M1584 145.500v-3.700h-17.200l9 10.300-9 10.300h17.200v-3.700" fill="none" stroke="#D6D6D6" stroke-width="1.600" stroke-linejoin="miter"/>
<polyline points="1695.71,150.84 1699.25,154.19 1702.79,150.84" fill="none" stroke="#FFFFFF" stroke-width="1.8" stroke-linecap="round" stroke-linejoin="round"/>
<rect x="1563.800" y="180.800" width="22.600" height="20.600" fill="none" stroke="#D6D6D6" stroke-width="1.500"/>
<path d="M1563.800 184.300h22.600" stroke="#D6D6D6" stroke-width="1.300"/>
<path d="M1575 187.500v10.500M1570.500 193.800l4.500 4.500 4.500-4.500" fill="none" stroke="#3C9BE3" stroke-width="1.700"/>
<polyline points="1620.81,189.84 1624.4,193.19 1627.99,189.84" fill="none" stroke="#FFFFFF" stroke-width="1.8" stroke-linecap="round" stroke-linejoin="round"/>
<path d="M1577.500 219.500l8 8-13.500 13.500-8-8z" fill="none" stroke="#D68BE0" stroke-width="1.600" stroke-linejoin="round"/>
<path d="M1569 228l8 8-5 5-8-8z" fill="#B14CC4" stroke="#D68BE0" stroke-width="1.200" stroke-linejoin="round"/>
<polyline points="1638.81,228.84 1642.5,232.19 1646.19,228.84" fill="none" stroke="#FFFFFF" stroke-width="1.8" stroke-linecap="round" stroke-linejoin="round"/>
<path d="M1749 152.500h22.500l-8 9.500v13.500h-6.500v-13.500z" fill="none" stroke="#D6D6D6" stroke-width="1.700" stroke-linejoin="miter"/>
<polyline points="1768.81,223.14 1772.3,226.49 1775.79,223.14" fill="none" stroke="#FFFFFF" stroke-width="1.8" stroke-linecap="round" stroke-linejoin="round"/>
<circle cx="1826" cy="157" r="15" fill="none" stroke="#D6D6D6" stroke-width="1.700"/><path d="M1815.300 167.700L1799 184.200" stroke="#D6D6D6" stroke-width="1.900" stroke-linecap="round"/>
<polyline points="1842.81,223.14 1846.5,226.49 1850.19,223.14" fill="none" stroke="#FFFFFF" stroke-width="1.8" stroke-linecap="round" stroke-linejoin="round"/>
<g fill="none" stroke="#C8511F"><rect x="1895.800" y="141" width="40.600" height="41.800" stroke-width="1.800"/>
<rect x="1900.300" y="145.700" width="13.200" height="13.400" stroke-width="1.600"/><rect x="1918.600" y="145.700" width="13.200" height="13.400" stroke-width="1.600"/>
<rect x="1900.300" y="164.300" width="13.200" height="13.400" stroke-width="1.600"/><rect x="1918.600" y="164.300" width="13.200" height="13.400" stroke-width="1.600"/></g>
<g fill="none" stroke="#BDBDBD" stroke-width="1.300">
<rect x="1989.700" y="141.700" width="40.700" height="40.700"/>
<path d="M1989.700 147.300h40.700M1989.700 159.500h40.700M1989.700 171h40.700M2003.300 171v11.400M2017 171v11.400"/>
</g><rect x="1990.300" y="142.300" width="39.500" height="4.600" fill="#6E6E6E"/>
<circle cx="2008.700" cy="159" r="12.600" fill="#292929" stroke="#C8C8C8" stroke-width="1.500"/>
<path d="M2017.800 168l12.600 13.200" stroke="#C8C8C8" stroke-width="1.700"/>
<rect x="2001.800" y="157" width="3.600" height="7.300" fill="#8A8A8A"/><rect x="2006.900" y="151.300" width="3.600" height="13" fill="none" stroke="#E8E8E8" stroke-width="1.100"/><rect x="2012" y="154.200" width="3.600" height="10.100" fill="#2D8CDA"/>
<polyline points="2851.31,254.54 2857.9,260.99 2864.49,254.54" fill="none" stroke="#FFFFFF" stroke-width="1.8" stroke-linecap="round" stroke-linejoin="round"/>
<polyline points="53.800,1686.200 47,1693 53.800,1699.800" fill="none" stroke="#8A8A8A" stroke-width="1.700"/>
<polyline points="96.300,1686.200 103.100,1693 96.300,1699.800" fill="none" stroke="#C8C8C8" stroke-width="1.700"/>
<circle cx="2089" cy="1692.800" r="2.100" fill="#F0F0F0"/>
<circle cx="2095.1" cy="1692.800" r="2.100" fill="#F0F0F0"/>
<circle cx="2101.2" cy="1692.800" r="2.100" fill="#F0F0F0"/>
<path d="M2135 1692.500h17M2143.500 1684v17" stroke="#F0F0F0" stroke-width="1.700"/>
<rect x="2190.600" y="1686.5" width="2.700" height="2.700" fill="#F0F0F0"/>
<rect x="2190.600" y="1692.6" width="2.700" height="2.700" fill="#F0F0F0"/>
<rect x="2190.600" y="1698.7" width="2.700" height="2.700" fill="#F0F0F0"/>
<path d="M2233.500 1686.500v13l-9.500-6.500z" fill="#B8B8B8" stroke="#B8B8B8" stroke-width="1" stroke-linejoin="round"/>
<path d="M2843.500 1686.500v13l9.500-6.500z" fill="#B8B8B8" stroke="#B8B8B8" stroke-width="1" stroke-linejoin="round"/>
<path d="M2869.500 295.500h12.500l-6.250-9.500z" fill="#B8B8B8" stroke="#B8B8B8" stroke-width="1" stroke-linejoin="round"/>
<path d="M2869.500 1654.500h12.500l-6.250 9.500z" fill="#B8B8B8" stroke="#B8B8B8" stroke-width="1" stroke-linejoin="round"/>
<g fill="none" stroke="#F0F0F0" stroke-width="1.400">
<path d="M120.300 1735v-8.500h-20.600v18.300h9.500"/><path d="M99.700 1730h20.600"/>
<path d="M103 1734h6M103 1737.500h4.500M103 1741h4"/>
<circle cx="114.200" cy="1739.500" r="5.600"/></g><circle cx="114.200" cy="1739.500" r="2.600" fill="#F0F0F0"/>
<g fill="none" stroke="#F0F0F0" stroke-width="1.500" stroke-linecap="round" stroke-linejoin="round">
<circle cx="156" cy="1727.200" r="2.400"/>
<path d="M147 1730.500c3 1.500 6 2 9 2s6-0.500 9-2M152.500 1732.500v5.500l-3.500 7M159.500 1732.500v4"/>
<path d="M158.500 1737.500l8.500 8M167 1737.500l-8.500 8"/></g>
<g fill="none" stroke="#F4F4F4" stroke-width="1.500">
<rect x="2464.700" y="1724.500" width="19" height="19"/><path d="M2471 1724.500v19M2477.400 1724.500v19M2464.700 1730.800h19M2464.700 1737.200h19"/>
<rect x="2524.700" y="1724.500" width="20.400" height="19"/><rect x="2529.300" y="1728.700" width="11.200" height="10.600"/><path d="M2532 1732.300h6M2532 1735.700h6"/>
<rect x="2585" y="1724.500" width="20" height="19"/><path d="M2585 1737h20M2591.500 1724.500v8.500h7v-8.500"/></g>
<path d="M2633 1734.600h11" stroke="#E0E0E0" stroke-width="1.400"/>
<path d="M2653 1734.600h148" stroke="#C8C8C8" stroke-width="1.200"/><path d="M2727 1730v9.500" stroke="#C8C8C8" stroke-width="1.300"/>
<path d="M2809.700 1734.600h10.400M2814.900 1729.400v10.400" stroke="#E0E0E0" stroke-width="1.400"/></svg>
<span class="t" style="left:64.11px;top:281.00px;font-size:20.5px;line-height:24px;color:#F4F4F4;font-family:'DejaVu Sans Condensed', 'DejaVu Sans', 'Liberation Sans', sans-serif;transform:scaleX(1.06);-webkit-text-stroke:0.2px;">A</span>
<span class="t" style="left:106.33px;top:281.00px;font-size:20.5px;line-height:24px;color:#F4F4F4;font-family:'DejaVu Sans Condensed', 'DejaVu Sans', 'Liberation Sans', sans-serif;transform:scaleX(1.06);-webkit-text-stroke:0.2px;">B</span>
<span class="t" style="left:266.11px;top:281.00px;font-size:20.5px;line-height:24px;color:#F4F4F4;font-family:'DejaVu Sans Condensed', 'DejaVu Sans', 'Liberation Sans', sans-serif;transform:scaleX(1.06);-webkit-text-stroke:0.2px;">C</span>
<span class="t" style="left:534.05px;top:281.00px;font-size:20.5px;line-height:24px;color:#F4F4F4;font-family:'DejaVu Sans Condensed', 'DejaVu Sans', 'Liberation Sans', sans-serif;transform:scaleX(1.06);-webkit-text-stroke:0.2px;">D</span>
<span class="t" style="left:804.11px;top:281.00px;font-size:20.5px;line-height:24px;color:#F4F4F4;font-family:'DejaVu Sans Condensed', 'DejaVu Sans', 'Liberation Sans', sans-serif;transform:scaleX(1.06);-webkit-text-stroke:0.2px;">E</span>
<span class="t" style="left:1041.14px;top:281.00px;font-size:20.5px;line-height:24px;color:#F4F4F4;font-family:'DejaVu Sans Condensed', 'DejaVu Sans', 'Liberation Sans', sans-serif;transform:scaleX(1.06);-webkit-text-stroke:0.2px;">F</span>
<span class="t" style="left:1244.08px;top:281.00px;font-size:20.5px;line-height:24px;color:#F4F4F4;font-family:'DejaVu Sans Condensed', 'DejaVu Sans', 'Liberation Sans', sans-serif;transform:scaleX(1.06);-webkit-text-stroke:0.2px;">G</span>
<span class="t" style="left:1449.58px;top:281.00px;font-size:20.5px;line-height:24px;color:#F4F4F4;font-family:'DejaVu Sans Condensed', 'DejaVu Sans', 'Liberation Sans', sans-serif;transform:scaleX(1.06);-webkit-text-stroke:0.2px;">H</span>
<span class="t" style="left:1660.82px;top:281.00px;font-size:20.5px;line-height:24px;color:#F4F4F4;font-family:'DejaVu Sans Condensed', 'DejaVu Sans', 'Liberation Sans', sans-serif;transform:scaleX(1.06);-webkit-text-stroke:0.2px;">I</span>
<span class="t" style="left:1850.41px;top:281.00px;font-size:20.5px;line-height:24px;color:#F4F4F4;font-family:'DejaVu Sans Condensed', 'DejaVu Sans', 'Liberation Sans', sans-serif;transform:scaleX(1.06);-webkit-text-stroke:0.2px;">J</span>
<span class="t" style="left:2013.58px;top:281.00px;font-size:20.5px;line-height:24px;color:#F4F4F4;font-family:'DejaVu Sans Condensed', 'DejaVu Sans', 'Liberation Sans', sans-serif;transform:scaleX(1.06);-webkit-text-stroke:0.2px;">K</span>
<span class="t" style="left:2183.64px;top:281.00px;font-size:20.5px;line-height:24px;color:#F4F4F4;font-family:'DejaVu Sans Condensed', 'DejaVu Sans', 'Liberation Sans', sans-serif;transform:scaleX(1.06);-webkit-text-stroke:0.2px;">L</span>
<span class="t" style="left:2350.52px;top:281.00px;font-size:20.5px;line-height:24px;color:#F4F4F4;font-family:'DejaVu Sans Condensed', 'DejaVu Sans', 'Liberation Sans', sans-serif;transform:scaleX(1.06);-webkit-text-stroke:0.2px;">M</span>
<span class="t" style="left:2520.58px;top:281.00px;font-size:20.5px;line-height:24px;color:#F4F4F4;font-family:'DejaVu Sans Condensed', 'DejaVu Sans', 'Liberation Sans', sans-serif;transform:scaleX(1.06);-webkit-text-stroke:0.2px;">N</span>
<span class="t" style="left:2689.05px;top:281.00px;font-size:20.5px;line-height:24px;color:#F4F4F4;font-family:'DejaVu Sans Condensed', 'DejaVu Sans', 'Liberation Sans', sans-serif;transform:scaleX(1.06);-webkit-text-stroke:0.2px;">O</span>
<span class="t" style="left:25.96px;top:330.00px;font-size:20.5px;line-height:24px;color:#F4F4F4;font-family:'DejaVu Sans Condensed', 'DejaVu Sans', 'Liberation Sans', sans-serif;letter-spacing:-0.700px;transform:scaleX(1.04);-webkit-text-stroke:0.2px;">1</span>
<span class="t" style="left:26.48px;top:371.00px;font-size:20.5px;line-height:24px;color:#F4F4F4;font-family:'DejaVu Sans Condensed', 'DejaVu Sans', 'Liberation Sans', sans-serif;letter-spacing:-0.700px;transform:scaleX(1.04);-webkit-text-stroke:0.2px;">2</span>
<span class="t" style="left:26.48px;top:400.00px;font-size:20.5px;line-height:24px;color:#F4F4F4;font-family:'DejaVu Sans Condensed', 'DejaVu Sans', 'Liberation Sans', sans-serif;letter-spacing:-0.700px;transform:scaleX(1.04);-webkit-text-stroke:0.2px;">3</span>
<span class="t" style="left:25.96px;top:431.00px;font-size:20.5px;line-height:24px;color:#F4F4F4;font-family:'DejaVu Sans Condensed', 'DejaVu Sans', 'Liberation Sans', sans-serif;letter-spacing:-0.700px;transform:scaleX(1.04);-webkit-text-stroke:0.2px;">4</span>
<span class="t" style="left:25.96px;top:461.00px;font-size:20.5px;line-height:24px;color:#F4F4F4;font-family:'DejaVu Sans Condensed', 'DejaVu Sans', 'Liberation Sans', sans-serif;letter-spacing:-0.700px;transform:scaleX(1.04);-webkit-text-stroke:0.2px;">6</span>
<span class="t" style="left:26.48px;top:488.00px;font-size:20.5px;line-height:24px;color:#F4F4F4;font-family:'DejaVu Sans Condensed', 'DejaVu Sans', 'Liberation Sans', sans-serif;letter-spacing:-0.700px;transform:scaleX(1.04);-webkit-text-stroke:0.2px;">7</span>
<span class="t" style="left:20.08px;top:518.00px;font-size:20.5px;line-height:24px;color:#F4F4F4;font-family:'DejaVu Sans Condensed', 'DejaVu Sans', 'Liberation Sans', sans-serif;letter-spacing:-0.700px;transform:scaleX(1.04);-webkit-text-stroke:0.2px;">13</span>
<span class="t" style="left:19.56px;top:566.00px;font-size:20.5px;line-height:24px;color:#F4F4F4;font-family:'DejaVu Sans Condensed', 'DejaVu Sans', 'Liberation Sans', sans-serif;letter-spacing:-0.700px;transform:scaleX(1.04);-webkit-text-stroke:0.2px;">14</span>
<span class="t" style="left:20.08px;top:591.00px;font-size:20.5px;line-height:24px;color:#F4F4F4;font-family:'DejaVu Sans Condensed', 'DejaVu Sans', 'Liberation Sans', sans-serif;letter-spacing:-0.700px;transform:scaleX(1.04);-webkit-text-stroke:0.2px;">15</span>
<span class="t" style="left:19.56px;top:626.00px;font-size:20.5px;line-height:24px;color:#F4F4F4;font-family:'DejaVu Sans Condensed', 'DejaVu Sans', 'Liberation Sans', sans-serif;letter-spacing:-0.700px;transform:scaleX(1.04);-webkit-text-stroke:0.2px;">16</span>
<span class="t" style="left:20.08px;top:655.00px;font-size:20.5px;line-height:24px;color:#F4F4F4;font-family:'DejaVu Sans Condensed', 'DejaVu Sans', 'Liberation Sans', sans-serif;letter-spacing:-0.700px;transform:scaleX(1.04);-webkit-text-stroke:0.2px;">17</span>
<span class="t" style="left:20.08px;top:683.00px;font-size:20.5px;line-height:24px;color:#F4F4F4;font-family:'DejaVu Sans Condensed', 'DejaVu Sans', 'Liberation Sans', sans-serif;letter-spacing:-0.700px;transform:scaleX(1.04);-webkit-text-stroke:0.2px;">18</span>
<span class="t" style="left:20.08px;top:711.00px;font-size:20.5px;line-height:24px;color:#F4F4F4;font-family:'DejaVu Sans Condensed', 'DejaVu Sans', 'Liberation Sans', sans-serif;letter-spacing:-0.700px;transform:scaleX(1.04);-webkit-text-stroke:0.2px;">19</span>
<span class="t" style="left:20.08px;top:739.00px;font-size:20.5px;line-height:24px;color:#F4F4F4;font-family:'DejaVu Sans Condensed', 'DejaVu Sans', 'Liberation Sans', sans-serif;letter-spacing:-0.700px;transform:scaleX(1.04);-webkit-text-stroke:0.2px;">20</span>
<span class="t" style="left:20.60px;top:767.00px;font-size:20.5px;line-height:24px;color:#F4F4F4;font-family:'DejaVu Sans Condensed', 'DejaVu Sans', 'Liberation Sans', sans-serif;letter-spacing:-0.700px;transform:scaleX(1.04);-webkit-text-stroke:0.2px;">21</span>
<span class="t" style="left:20.60px;top:795.00px;font-size:20.5px;line-height:24px;color:#F4F4F4;font-family:'DejaVu Sans Condensed', 'DejaVu Sans', 'Liberation Sans', sans-serif;letter-spacing:-0.700px;transform:scaleX(1.04);-webkit-text-stroke:0.2px;">22</span>
<span class="t" style="left:20.60px;top:823.00px;font-size:20.5px;line-height:24px;color:#F4F4F4;font-family:'DejaVu Sans Condensed', 'DejaVu Sans', 'Liberation Sans', sans-serif;letter-spacing:-0.700px;transform:scaleX(1.04);-webkit-text-stroke:0.2px;">23</span>
<span class="t" style="left:20.08px;top:851.00px;font-size:20.5px;line-height:24px;color:#F4F4F4;font-family:'DejaVu Sans Condensed', 'DejaVu Sans', 'Liberation Sans', sans-serif;letter-spacing:-0.700px;transform:scaleX(1.04);-webkit-text-stroke:0.2px;">24</span>
<span class="t" style="left:20.60px;top:879.00px;font-size:20.5px;line-height:24px;color:#F4F4F4;font-family:'DejaVu Sans Condensed', 'DejaVu Sans', 'Liberation Sans', sans-serif;letter-spacing:-0.700px;transform:scaleX(1.04);-webkit-text-stroke:0.2px;">25</span>
<span class="t" style="left:20.08px;top:907.00px;font-size:20.5px;line-height:24px;color:#F4F4F4;font-family:'DejaVu Sans Condensed', 'DejaVu Sans', 'Liberation Sans', sans-serif;letter-spacing:-0.700px;transform:scaleX(1.04);-webkit-text-stroke:0.2px;">26</span>
<span class="t" style="left:20.60px;top:935.00px;font-size:20.5px;line-height:24px;color:#F4F4F4;font-family:'DejaVu Sans Condensed', 'DejaVu Sans', 'Liberation Sans', sans-serif;letter-spacing:-0.700px;transform:scaleX(1.04);-webkit-text-stroke:0.2px;">27</span>
<span class="t" style="left:20.60px;top:963.00px;font-size:20.5px;line-height:24px;color:#F4F4F4;font-family:'DejaVu Sans Condensed', 'DejaVu Sans', 'Liberation Sans', sans-serif;letter-spacing:-0.700px;transform:scaleX(1.04);-webkit-text-stroke:0.2px;">28</span>
<span class="t" style="left:20.60px;top:991.00px;font-size:20.5px;line-height:24px;color:#F4F4F4;font-family:'DejaVu Sans Condensed', 'DejaVu Sans', 'Liberation Sans', sans-serif;letter-spacing:-0.700px;transform:scaleX(1.04);-webkit-text-stroke:0.2px;">29</span>
<span class="t" style="left:20.08px;top:1019.00px;font-size:20.5px;line-height:24px;color:#F4F4F4;font-family:'DejaVu Sans Condensed', 'DejaVu Sans', 'Liberation Sans', sans-serif;letter-spacing:-0.700px;transform:scaleX(1.04);-webkit-text-stroke:0.2px;">30</span>
<span class="t" style="left:20.60px;top:1047.00px;font-size:20.5px;line-height:24px;color:#F4F4F4;font-family:'DejaVu Sans Condensed', 'DejaVu Sans', 'Liberation Sans', sans-serif;letter-spacing:-0.700px;transform:scaleX(1.04);-webkit-text-stroke:0.2px;">31</span>
<span class="t" style="left:20.60px;top:1075.00px;font-size:20.5px;line-height:24px;color:#F4F4F4;font-family:'DejaVu Sans Condensed', 'DejaVu Sans', 'Liberation Sans', sans-serif;letter-spacing:-0.700px;transform:scaleX(1.04);-webkit-text-stroke:0.2px;">32</span>
<span class="t" style="left:20.60px;top:1103.00px;font-size:20.5px;line-height:24px;color:#F4F4F4;font-family:'DejaVu Sans Condensed', 'DejaVu Sans', 'Liberation Sans', sans-serif;letter-spacing:-0.700px;transform:scaleX(1.04);-webkit-text-stroke:0.2px;">33</span>
<span class="t" style="left:20.08px;top:1131.00px;font-size:20.5px;line-height:24px;color:#F4F4F4;font-family:'DejaVu Sans Condensed', 'DejaVu Sans', 'Liberation Sans', sans-serif;letter-spacing:-0.700px;transform:scaleX(1.04);-webkit-text-stroke:0.2px;">34</span>
<span class="t" style="left:20.60px;top:1159.00px;font-size:20.5px;line-height:24px;color:#F4F4F4;font-family:'DejaVu Sans Condensed', 'DejaVu Sans', 'Liberation Sans', sans-serif;letter-spacing:-0.700px;transform:scaleX(1.04);-webkit-text-stroke:0.2px;">35</span>
<span class="t" style="left:20.08px;top:1187.00px;font-size:20.5px;line-height:24px;color:#F4F4F4;font-family:'DejaVu Sans Condensed', 'DejaVu Sans', 'Liberation Sans', sans-serif;letter-spacing:-0.700px;transform:scaleX(1.04);-webkit-text-stroke:0.2px;">36</span>
<span class="t" style="left:20.60px;top:1223.00px;font-size:20.5px;line-height:24px;color:#F4F4F4;font-family:'DejaVu Sans Condensed', 'DejaVu Sans', 'Liberation Sans', sans-serif;letter-spacing:-0.700px;transform:scaleX(1.04);-webkit-text-stroke:0.2px;">37</span>
<span class="t" style="left:20.60px;top:1251.00px;font-size:20.5px;line-height:24px;color:#F4F4F4;font-family:'DejaVu Sans Condensed', 'DejaVu Sans', 'Liberation Sans', sans-serif;letter-spacing:-0.700px;transform:scaleX(1.04);-webkit-text-stroke:0.2px;">38</span>
<span class="t" style="left:20.60px;top:1279.00px;font-size:20.5px;line-height:24px;color:#F4F4F4;font-family:'DejaVu Sans Condensed', 'DejaVu Sans', 'Liberation Sans', sans-serif;letter-spacing:-0.700px;transform:scaleX(1.04);-webkit-text-stroke:0.2px;">39</span>
<span class="t" style="left:20.08px;top:1321.00px;font-size:20.5px;line-height:24px;color:#F4F4F4;font-family:'DejaVu Sans Condensed', 'DejaVu Sans', 'Liberation Sans', sans-serif;letter-spacing:-0.700px;transform:scaleX(1.04);-webkit-text-stroke:0.2px;">40</span>
<span class="t" style="left:20.60px;top:1348.00px;font-size:20.5px;line-height:24px;color:#F4F4F4;font-family:'DejaVu Sans Condensed', 'DejaVu Sans', 'Liberation Sans', sans-serif;letter-spacing:-0.700px;transform:scaleX(1.04);-webkit-text-stroke:0.2px;">41</span>
<span class="t" style="left:20.60px;top:1376.00px;font-size:20.5px;line-height:24px;color:#F4F4F4;font-family:'DejaVu Sans Condensed', 'DejaVu Sans', 'Liberation Sans', sans-serif;letter-spacing:-0.700px;transform:scaleX(1.04);-webkit-text-stroke:0.2px;">42</span>
<span class="t" style="left:20.60px;top:1404.00px;font-size:20.5px;line-height:24px;color:#F4F4F4;font-family:'DejaVu Sans Condensed', 'DejaVu Sans', 'Liberation Sans', sans-serif;letter-spacing:-0.700px;transform:scaleX(1.04);-webkit-text-stroke:0.2px;">43</span>
<span class="t" style="left:20.08px;top:1432.00px;font-size:20.5px;line-height:24px;color:#F4F4F4;font-family:'DejaVu Sans Condensed', 'DejaVu Sans', 'Liberation Sans', sans-serif;letter-spacing:-0.700px;transform:scaleX(1.04);-webkit-text-stroke:0.2px;">44</span>
<span class="t" style="left:20.60px;top:1460.00px;font-size:20.5px;line-height:24px;color:#F4F4F4;font-family:'DejaVu Sans Condensed', 'DejaVu Sans', 'Liberation Sans', sans-serif;letter-spacing:-0.700px;transform:scaleX(1.04);-webkit-text-stroke:0.2px;">45</span>
<span class="t" style="left:20.08px;top:1503.00px;font-size:20.5px;line-height:24px;color:#F4F4F4;font-family:'DejaVu Sans Condensed', 'DejaVu Sans', 'Liberation Sans', sans-serif;letter-spacing:-0.700px;transform:scaleX(1.04);-webkit-text-stroke:0.2px;">46</span>
<span class="t" style="left:20.60px;top:1531.00px;font-size:20.5px;line-height:24px;color:#F4F4F4;font-family:'DejaVu Sans Condensed', 'DejaVu Sans', 'Liberation Sans', sans-serif;letter-spacing:-0.700px;transform:scaleX(1.04);-webkit-text-stroke:0.2px;">47</span>
<span class="t" style="left:20.60px;top:1559.00px;font-size:20.5px;line-height:24px;color:#F4F4F4;font-family:'DejaVu Sans Condensed', 'DejaVu Sans', 'Liberation Sans', sans-serif;letter-spacing:-0.700px;transform:scaleX(1.04);-webkit-text-stroke:0.2px;">48</span>
<span class="t" style="left:20.60px;top:1587.00px;font-size:20.5px;line-height:24px;color:#F4F4F4;font-family:'DejaVu Sans Condensed', 'DejaVu Sans', 'Liberation Sans', sans-serif;letter-spacing:-0.700px;transform:scaleX(1.04);-webkit-text-stroke:0.2px;">49</span>
<span class="t" style="left:20.08px;top:1629.00px;font-size:20.5px;line-height:24px;color:#F4F4F4;font-family:'DejaVu Sans Condensed', 'DejaVu Sans', 'Liberation Sans', sans-serif;letter-spacing:-0.700px;transform:scaleX(1.04);-webkit-text-stroke:0.2px;">50</span>
<h1 class="t" style="left:95.00px;top:309.00px;font-size:38.5px;line-height:45px;color:#222222;font-family:'DejaVu Sans Condensed', 'DejaVu Sans', 'Liberation Sans', sans-serif;font-weight:700;-webkit-text-stroke:0.3px;letter-spacing:0.195px;">Startup Costs (CAPEX)</h1>
<h2 class="t" style="left:95.30px;top:358.00px;font-size:33.6px;line-height:39px;color:#000000;font-family:'DejaVu Sans Condensed', 'DejaVu Sans', 'Liberation Sans', sans-serif;font-weight:700;-webkit-text-stroke:0.3px;letter-spacing:0.393px;">ABC Company Inc.</h2>
<a class="t" style="left:93.26px;top:399.00px;font-size:21px;line-height:24px;color:#2F76EC;font-family:'DejaVu Sans Condensed', 'DejaVu Sans', 'Liberation Sans', sans-serif;font-weight:700;-webkit-text-stroke:0.3px;letter-spacing:-0.093px;transform:scaleX(1.04);">Go to Table of Contents</a>
<span class="t" style="left:93.52px;top:462.00px;font-size:21px;line-height:24px;color:#000;font-family:'DejaVu Sans Condensed', 'DejaVu Sans', 'Liberation Sans', sans-serif;font-weight:700;-webkit-text-stroke:0.3px;letter-spacing:0.017px;transform:scaleX(1.04);">Fiscal Year</span>
<span class="t" style="left:93.52px;top:490.00px;font-size:21px;line-height:24px;color:#000;font-family:'DejaVu Sans Condensed', 'DejaVu Sans', 'Liberation Sans', sans-serif;font-weight:700;-webkit-text-stroke:0.3px;letter-spacing:0.154px;transform:scaleX(1.04);">Month</span>
<h2 class="t" style="left:95.00px;top:546.00px;font-size:38.5px;line-height:45px;color:#222222;font-family:'DejaVu Sans Condensed', 'DejaVu Sans', 'Liberation Sans', sans-serif;font-weight:700;-webkit-text-stroke:0.3px;letter-spacing:-0.193px;">Startup Costs, $</h2>
<h2 class="t" style="left:95.00px;top:1303.00px;font-size:38.5px;line-height:45px;color:#222222;font-family:'DejaVu Sans Condensed', 'DejaVu Sans', 'Liberation Sans', sans-serif;font-weight:700;-webkit-text-stroke:0.3px;letter-spacing:-0.096px;">Startup Costs Depreciation, $</h2>
<span class="t" style="left:1707.16px;top:462.00px;font-size:21px;line-height:24px;color:#000;font-family:'DejaVu Sans Condensed', 'DejaVu Sans', 'Liberation Sans', sans-serif;font-weight:700;-webkit-text-stroke:0.3px;letter-spacing:0.308px;transform:scaleX(1.04);">2025</span>
<span class="t" style="left:1683.12px;top:490.00px;font-size:21px;line-height:24px;color:#000;font-family:'DejaVu Sans Condensed', 'DejaVu Sans', 'Liberation Sans', sans-serif;font-weight:700;-webkit-text-stroke:0.3px;letter-spacing:0.608px;transform:scaleX(1.04);">Dec-25</span>
<span class="t" style="left:1876.36px;top:462.00px;font-size:21px;line-height:24px;color:#000;font-family:'DejaVu Sans Condensed', 'DejaVu Sans', 'Liberation Sans', sans-serif;font-weight:700;-webkit-text-stroke:0.3px;letter-spacing:0.308px;transform:scaleX(1.04);">2026</span>
<span class="t" style="left:1858.14px;top:490.00px;font-size:21px;line-height:24px;color:#000;font-family:'DejaVu Sans Condensed', 'DejaVu Sans', 'Liberation Sans', sans-serif;font-weight:700;-webkit-text-stroke:0.3px;letter-spacing:0.688px;transform:scaleX(1.04);">Jan-26</span>
<span class="t" style="left:2045.36px;top:462.00px;font-size:21px;line-height:24px;color:#000;font-family:'DejaVu Sans Condensed', 'DejaVu Sans', 'Liberation Sans', sans-serif;font-weight:700;-webkit-text-stroke:0.3px;letter-spacing:0.308px;transform:scaleX(1.04);">2026</span>
<span class="t" style="left:2022.62px;top:490.00px;font-size:21px;line-height:24px;color:#000;font-family:'DejaVu Sans Condensed', 'DejaVu Sans', 'Liberation Sans', sans-serif;font-weight:700;-webkit-text-stroke:0.3px;letter-spacing:0.558px;transform:scaleX(1.04);">Feb-26</span>
<span class="t" style="left:2214.36px;top:462.00px;font-size:21px;line-height:24px;color:#000;font-family:'DejaVu Sans Condensed', 'DejaVu Sans', 'Liberation Sans', sans-serif;font-weight:700;-webkit-text-stroke:0.3px;letter-spacing:0.308px;transform:scaleX(1.04);">2026</span>
<span class="t" style="left:2189.32px;top:490.00px;font-size:21px;line-height:24px;color:#000;font-family:'DejaVu Sans Condensed', 'DejaVu Sans', 'Liberation Sans', sans-serif;font-weight:700;-webkit-text-stroke:0.3px;letter-spacing:0.600px;transform:scaleX(1.04);">Mar-26</span>
<span class="t" style="left:2383.36px;top:462.00px;font-size:21px;line-height:24px;color:#000;font-family:'DejaVu Sans Condensed', 'DejaVu Sans', 'Liberation Sans', sans-serif;font-weight:700;-webkit-text-stroke:0.3px;letter-spacing:0.308px;transform:scaleX(1.04);">2026</span>
<span class="t" style="left:2363.60px;top:490.00px;font-size:21px;line-height:24px;color:#000;font-family:'DejaVu Sans Condensed', 'DejaVu Sans', 'Liberation Sans', sans-serif;font-weight:700;-webkit-text-stroke:0.3px;letter-spacing:0.185px;transform:scaleX(1.04);">Apr-26</span>
<span class="t" style="left:2552.36px;top:462.00px;font-size:21px;line-height:24px;color:#000;font-family:'DejaVu Sans Condensed', 'DejaVu Sans', 'Liberation Sans', sans-serif;font-weight:700;-webkit-text-stroke:0.3px;letter-spacing:0.308px;transform:scaleX(1.04);">2026</span>
<span class="t" style="left:2523.32px;top:490.00px;font-size:21px;line-height:24px;color:#000;font-family:'DejaVu Sans Condensed', 'DejaVu Sans', 'Liberation Sans', sans-serif;font-weight:700;-webkit-text-stroke:0.3px;letter-spacing:0.769px;transform:scaleX(1.04);">May-26</span>
<span class="t" style="left:2721.36px;top:462.00px;font-size:21px;line-height:24px;color:#000;font-family:'DejaVu Sans Condensed', 'DejaVu Sans', 'Liberation Sans', sans-serif;font-weight:700;-webkit-text-stroke:0.3px;letter-spacing:0.308px;transform:scaleX(1.04);">2026</span>
<span class="t" style="left:2701.44px;top:490.00px;font-size:21px;line-height:24px;color:#000;font-family:'DejaVu Sans Condensed', 'DejaVu Sans', 'Liberation Sans', sans-serif;font-weight:700;-webkit-text-stroke:0.3px;letter-spacing:1.015px;transform:scaleX(1.04);">Jun-26</span>
<span class="t" style="left:481.71px;top:623.00px;font-size:21px;line-height:24px;color:#FFFFFF;font-family:'DejaVu Sans Condensed', 'DejaVu Sans', 'Liberation Sans', sans-serif;font-weight:700;-webkit-text-stroke:0.3px;letter-spacing:0.105px;transform:scaleX(1.04);">Categories</span>
<span class="t" style="left:978.87px;top:623.00px;font-size:21px;line-height:24px;color:#FFFFFF;font-family:'DejaVu Sans Condensed', 'DejaVu Sans', 'Liberation Sans', sans-serif;font-weight:700;-webkit-text-stroke:0.3px;letter-spacing:0.133px;transform:scaleX(1.04);">Launch date</span>
<span class="t" style="left:1201.20px;top:623.00px;font-size:21px;line-height:24px;color:#FFFFFF;font-family:'DejaVu Sans Condensed', 'DejaVu Sans', 'Liberation Sans', sans-serif;font-weight:700;-webkit-text-stroke:0.3px;letter-spacing:0.105px;transform:scaleX(1.04);">End date</span>
<span class="t" style="left:1390.41px;top:623.00px;font-size:21px;line-height:24px;color:#FFFFFF;font-family:'DejaVu Sans Condensed', 'DejaVu Sans', 'Liberation Sans', sans-serif;font-weight:700;-webkit-text-stroke:0.3px;letter-spacing:0.105px;transform:scaleX(1.04);">Spending, $</span>
<span class="t" style="left:1591.12px;top:623.00px;font-size:21px;line-height:24px;color:#FFFFFF;font-family:'DejaVu Sans Condensed', 'DejaVu Sans', 'Liberation Sans', sans-serif;font-weight:700;-webkit-text-stroke:0.3px;letter-spacing:0.105px;transform:scaleX(1.04);">Amortizable?</span>
<span class="t" style="left:140.52px;top:655.00px;font-size:21px;line-height:24px;color:#1F1F1F;font-family:'DejaVu Sans Condensed', 'DejaVu Sans', 'Liberation Sans', sans-serif;letter-spacing:0.011px;transform:scaleX(1.04);">Initial Website Platform Build</span>
<span class="t" style="left:1016.24px;top:655.00px;font-size:21px;line-height:24px;color:#1F1F1F;font-family:'DejaVu Sans Condensed', 'DejaVu Sans', 'Liberation Sans', sans-serif;letter-spacing:0.423px;transform:scaleX(1.04);">Jan-26</span>
<span class="t" style="left:1216.02px;top:655.00px;font-size:21px;line-height:24px;color:#1F1F1F;font-family:'DejaVu Sans Condensed', 'DejaVu Sans', 'Liberation Sans', sans-serif;letter-spacing:0.446px;transform:scaleX(1.04);">Mar-26</span>
<span class="t" style="left:1480.58px;top:655.00px;font-size:21px;line-height:24px;color:#1F1F1F;font-family:'DejaVu Sans Condensed', 'DejaVu Sans', 'Liberation Sans', sans-serif;letter-spacing:0.023px;transform:scaleX(1.04);">15,000</span>
<span class="t" style="left:1648.10px;top:655.00px;font-size:21px;line-height:24px;color:#1F1F1F;font-family:'DejaVu Sans Condensed', 'DejaVu Sans', 'Liberation Sans', sans-serif;letter-spacing:1.558px;transform:scaleX(1.04);">Yes</span>
<span class="t" style="left:1869.85px;top:655.00px;font-size:21px;line-height:24px;color:#000;font-family:'DejaVu Sans Condensed', 'DejaVu Sans', 'Liberation Sans', sans-serif;letter-spacing:-0.161px;transform:scaleX(1.04);">5,000</span>
<span class="t" style="left:2038.85px;top:655.00px;font-size:21px;line-height:24px;color:#000;font-family:'DejaVu Sans Condensed', 'DejaVu Sans', 'Liberation Sans', sans-serif;letter-spacing:-0.161px;transform:scaleX(1.04);">5,000</span>
<span class="t" style="left:2207.85px;top:655.00px;font-size:21px;line-height:24px;color:#000;font-family:'DejaVu Sans Condensed', 'DejaVu Sans', 'Liberation Sans', sans-serif;letter-spacing:-0.161px;transform:scaleX(1.04);">5,000</span>
<span class="t" style="left:2400.86px;top:654.00px;font-size:21px;line-height:24px;color:#000;font-family:'DejaVu Sans Condensed', 'DejaVu Sans', 'Liberation Sans', sans-serif;transform:scaleX(1.04);">-</span>
<span class="t" style="left:2569.86px;top:654.00px;font-size:21px;line-height:24px;color:#000;font-family:'DejaVu Sans Condensed', 'DejaVu Sans', 'Liberation Sans', sans-serif;transform:scaleX(1.04);">-</span>
<span class="t" style="left:2738.86px;top:654.00px;font-size:21px;line-height:24px;color:#000;font-family:'DejaVu Sans Condensed', 'DejaVu Sans', 'Liberation Sans', sans-serif;transform:scaleX(1.04);">-</span>
<span class="t" style="left:141.56px;top:683.00px;font-size:21px;line-height:24px;color:#1F1F1F;font-family:'DejaVu Sans Condensed', 'DejaVu Sans', 'Liberation Sans', sans-serif;letter-spacing:-0.147px;transform:scaleX(1.04);">Office Equipment &amp; Furnishings</span>
<span class="t" style="left:1016.24px;top:684.00px;font-size:21px;line-height:24px;color:#1F1F1F;font-family:'DejaVu Sans Condensed', 'DejaVu Sans', 'Liberation Sans', sans-serif;letter-spacing:0.423px;transform:scaleX(1.04);">Jan-26</span>
<span class="t" style="left:1217.12px;top:684.00px;font-size:21px;line-height:24px;color:#1F1F1F;font-family:'DejaVu Sans Condensed', 'DejaVu Sans', 'Liberation Sans', sans-serif;letter-spacing:0.223px;transform:scaleX(1.04);">Feb-26</span>
<span class="t" style="left:1493.85px;top:684.00px;font-size:21px;line-height:24px;color:#1F1F1F;font-family:'DejaVu Sans Condensed', 'DejaVu Sans', 'Liberation Sans', sans-serif;letter-spacing:-0.161px;transform:scaleX(1.04);">8,000</span>
<span class="t" style="left:1648.10px;top:684.00px;font-size:21px;line-height:24px;color:#1F1F1F;font-family:'DejaVu Sans Condensed', 'DejaVu Sans', 'Liberation Sans', sans-serif;letter-spacing:1.558px;transform:scaleX(1.04);">Yes</span>
<span class="t" style="left:1869.85px;top:684.00px;font-size:21px;line-height:24px;color:#000;font-family:'DejaVu Sans Condensed', 'DejaVu Sans', 'Liberation Sans', sans-serif;letter-spacing:-0.161px;transform:scaleX(1.04);">4,000</span>
<span class="t" style="left:2038.85px;top:684.00px;font-size:21px;line-height:24px;color:#000;font-family:'DejaVu Sans Condensed', 'DejaVu Sans', 'Liberation Sans', sans-serif;letter-spacing:-0.161px;transform:scaleX(1.04);">4,000</span>
<span class="t" style="left:2231.86px;top:683.00px;font-size:21px;line-height:24px;color:#000;font-family:'DejaVu Sans Condensed', 'DejaVu Sans', 'Liberation Sans', sans-serif;transform:scaleX(1.04);">-</span>
<span class="t" style="left:2400.86px;top:683.00px;font-size:21px;line-height:24px;color:#000;font-family:'DejaVu Sans Condensed', 'DejaVu Sans', 'Liberation Sans', sans-serif;transform:scaleX(1.04);">-</span>
<span class="t" style="left:2569.86px;top:683.00px;font-size:21px;line-height:24px;color:#000;font-family:'DejaVu Sans Condensed', 'DejaVu Sans', 'Liberation Sans', sans-serif;transform:scaleX(1.04);">-</span>
<span class="t" style="left:2738.86px;top:683.00px;font-size:21px;line-height:24px;color:#000;font-family:'DejaVu Sans Condensed', 'DejaVu Sans', 'Liberation Sans', sans-serif;transform:scaleX(1.04);">-</span>
<span class="t" style="left:140.52px;top:711.00px;font-size:21px;line-height:24px;color:#1F1F1F;font-family:'DejaVu Sans Condensed', 'DejaVu Sans', 'Liberation Sans', sans-serif;letter-spacing:-0.020px;transform:scaleX(1.04);">Initial Inventory Stock Purchase</span>
<span class="t" style="left:1016.24px;top:712.00px;font-size:21px;line-height:24px;color:#1F1F1F;font-family:'DejaVu Sans Condensed', 'DejaVu Sans', 'Liberation Sans', sans-serif;letter-spacing:0.423px;transform:scaleX(1.04);">Jan-26</span>
<span class="t" style="left:1220.24px;top:712.00px;font-size:21px;line-height:24px;color:#1F1F1F;font-family:'DejaVu Sans Condensed', 'DejaVu Sans', 'Liberation Sans', sans-serif;letter-spacing:0.423px;transform:scaleX(1.04);">Jan-26</span>
<span class="t" style="left:1481.62px;top:712.00px;font-size:21px;line-height:24px;color:#1F1F1F;font-family:'DejaVu Sans Condensed', 'DejaVu Sans', 'Liberation Sans', sans-serif;letter-spacing:-0.177px;transform:scaleX(1.04);">20,000</span>
<span class="t" style="left:1648.10px;top:712.00px;font-size:21px;line-height:24px;color:#1F1F1F;font-family:'DejaVu Sans Condensed', 'DejaVu Sans', 'Liberation Sans', sans-serif;letter-spacing:1.558px;transform:scaleX(1.04);">Yes</span>
<span class="t" style="left:1857.62px;top:712.00px;font-size:21px;line-height:24px;color:#000;font-family:'DejaVu Sans Condensed', 'DejaVu Sans', 'Liberation Sans', sans-serif;letter-spacing:-0.177px;transform:scaleX(1.04);">20,000</span>
<span class="t" style="left:2062.86px;top:711.00px;font-size:21px;line-height:24px;color:#000;font-family:'DejaVu Sans Condensed', 'DejaVu Sans', 'Liberation Sans', sans-serif;transform:scaleX(1.04);">-</span>
<span class="t" style="left:2231.86px;top:711.00px;font-size:21px;line-height:24px;color:#000;font-family:'DejaVu Sans Condensed', 'DejaVu Sans', 'Liberation Sans', sans-serif;transform:scaleX(1.04);">-</span>
<span class="t" style="left:2400.86px;top:711.00px;font-size:21px;line-height:24px;color:#000;font-family:'DejaVu Sans Condensed', 'DejaVu Sans', 'Liberation Sans', sans-serif;transform:scaleX(1.04);">-</span>
<span class="t" style="left:2569.86px;top:711.00px;font-size:21px;line-height:24px;color:#000;font-family:'DejaVu Sans Condensed', 'DejaVu Sans', 'Liberation Sans', sans-serif;transform:scaleX(1.04);">-</span>
<span class="t" style="left:2738.86px;top:711.00px;font-size:21px;line-height:24px;color:#000;font-family:'DejaVu Sans Condensed', 'DejaVu Sans', 'Liberation Sans', sans-serif;transform:scaleX(1.04);">-</span>
<span class="t" style="left:140.52px;top:739.00px;font-size:21px;line-height:24px;color:#1F1F1F;font-family:'DejaVu Sans Condensed', 'DejaVu Sans', 'Liberation Sans', sans-serif;letter-spacing:-0.042px;transform:scaleX(1.04);">Branding &amp; Design Package</span>
<span class="t" style="left:1016.24px;top:740.00px;font-size:21px;line-height:24px;color:#1F1F1F;font-family:'DejaVu Sans Condensed', 'DejaVu Sans', 'Liberation Sans', sans-serif;letter-spacing:0.423px;transform:scaleX(1.04);">Jan-26</span>
<span class="t" style="left:1216.02px;top:740.00px;font-size:21px;line-height:24px;color:#1F1F1F;font-family:'DejaVu Sans Condensed', 'DejaVu Sans', 'Liberation Sans', sans-serif;letter-spacing:0.446px;transform:scaleX(1.04);">Mar-26</span>
<span class="t" style="left:1493.85px;top:740.00px;font-size:21px;line-height:24px;color:#1F1F1F;font-family:'DejaVu Sans Condensed', 'DejaVu Sans', 'Liberation Sans', sans-serif;letter-spacing:-0.161px;transform:scaleX(1.04);">7,000</span>
<span class="t" style="left:1648.10px;top:740.00px;font-size:21px;line-height:24px;color:#1F1F1F;font-family:'DejaVu Sans Condensed', 'DejaVu Sans', 'Liberation Sans', sans-serif;letter-spacing:1.558px;transform:scaleX(1.04);">Yes</span>
<span class="t" style="left:1869.85px;top:740.00px;font-size:21px;line-height:24px;color:#000;font-family:'DejaVu Sans Condensed', 'DejaVu Sans', 'Liberation Sans', sans-serif;letter-spacing:-0.161px;transform:scaleX(1.04);">2,333</span>
<span class="t" style="left:2038.85px;top:740.00px;font-size:21px;line-height:24px;color:#000;font-family:'DejaVu Sans Condensed', 'DejaVu Sans', 'Liberation Sans', sans-serif;letter-spacing:-0.161px;transform:scaleX(1.04);">2,333</span>
<span class="t" style="left:2207.85px;top:740.00px;font-size:21px;line-height:24px;color:#000;font-family:'DejaVu Sans Condensed', 'DejaVu Sans', 'Liberation Sans', sans-serif;letter-spacing:-0.161px;transform:scaleX(1.04);">2,333</span>
<span class="t" style="left:2400.86px;top:739.00px;font-size:21px;line-height:24px;color:#000;font-family:'DejaVu Sans Condensed', 'DejaVu Sans', 'Liberation Sans', sans-serif;transform:scaleX(1.04);">-</span>
<span class="t" style="left:2569.86px;top:739.00px;font-size:21px;line-height:24px;color:#000;font-family:'DejaVu Sans Condensed', 'DejaVu Sans', 'Liberation Sans', sans-serif;transform:scaleX(1.04);">-</span>
<span class="t" style="left:2738.86px;top:739.00px;font-size:21px;line-height:24px;color:#000;font-family:'DejaVu Sans Condensed', 'DejaVu Sans', 'Liberation Sans', sans-serif;transform:scaleX(1.04);">-</span>
<span class="t" style="left:141.56px;top:767.00px;font-size:21px;line-height:24px;color:#1F1F1F;font-family:'DejaVu Sans Condensed', 'DejaVu Sans', 'Liberation Sans', sans-serif;letter-spacing:0.020px;transform:scaleX(1.04);">Warehouse Setup &amp; Racking</span>
<span class="t" style="left:1015.20px;top:768.00px;font-size:21px;line-height:24px;color:#1F1F1F;font-family:'DejaVu Sans Condensed', 'DejaVu Sans', 'Liberation Sans', sans-serif;letter-spacing:0.223px;transform:scaleX(1.04);">Apr-26</span>
<span class="t" style="left:1220.24px;top:768.00px;font-size:21px;line-height:24px;color:#1F1F1F;font-family:'DejaVu Sans Condensed', 'DejaVu Sans', 'Liberation Sans', sans-serif;letter-spacing:0.423px;transform:scaleX(1.04);">Jun-26</span>
<span class="t" style="left:1480.58px;top:768.00px;font-size:21px;line-height:24px;color:#1F1F1F;font-family:'DejaVu Sans Condensed', 'DejaVu Sans', 'Liberation Sans', sans-serif;letter-spacing:0.023px;transform:scaleX(1.04);">10,000</span>
<span class="t" style="left:1648.10px;top:768.00px;font-size:21px;line-height:24px;color:#1F1F1F;font-family:'DejaVu Sans Condensed', 'DejaVu Sans', 'Liberation Sans', sans-serif;letter-spacing:1.558px;transform:scaleX(1.04);">Yes</span>
<span class="t" style="left:1893.86px;top:767.00px;font-size:21px;line-height:24px;color:#000;font-family:'DejaVu Sans Condensed', 'DejaVu Sans', 'Liberation Sans', sans-serif;transform:scaleX(1.04);">-</span>
<span class="t" style="left:2062.86px;top:767.00px;font-size:21px;line-height:24px;color:#000;font-family:'DejaVu Sans Condensed', 'DejaVu Sans', 'Liberation Sans', sans-serif;transform:scaleX(1.04);">-</span>
<span class="t" style="left:2231.86px;top:767.00px;font-size:21px;line-height:24px;color:#000;font-family:'DejaVu Sans Condensed', 'DejaVu Sans', 'Liberation Sans', sans-serif;transform:scaleX(1.04);">-</span>
<span class="t" style="left:2376.85px;top:768.00px;font-size:21px;line-height:24px;color:#000;font-family:'DejaVu Sans Condensed', 'DejaVu Sans', 'Liberation Sans', sans-serif;letter-spacing:-0.161px;transform:scaleX(1.04);">3,333</span>
<span class="t" style="left:2545.85px;top:768.00px;font-size:21px;line-height:24px;color:#000;font-family:'DejaVu Sans Condensed', 'DejaVu Sans', 'Liberation Sans', sans-serif;letter-spacing:-0.161px;transform:scaleX(1.04);">3,333</span>
<span class="t" style="left:2714.85px;top:768.00px;font-size:21px;line-height:24px;color:#000;font-family:'DejaVu Sans Condensed', 'DejaVu Sans', 'Liberation Sans', sans-serif;letter-spacing:-0.161px;transform:scaleX(1.04);">3,333</span>
<span class="t" style="left:140.52px;top:795.00px;font-size:21px;line-height:24px;color:#1F1F1F;font-family:'DejaVu Sans Condensed', 'DejaVu Sans', 'Liberation Sans', sans-serif;letter-spacing:-0.159px;transform:scaleX(1.04);">Photography &amp; Video Equipment</span>
<span class="t" style="left:1013.12px;top:796.00px;font-size:21px;line-height:24px;color:#1F1F1F;font-family:'DejaVu Sans Condensed', 'DejaVu Sans', 'Liberation Sans', sans-serif;letter-spacing:0.223px;transform:scaleX(1.04);">Feb-26</span>
<span class="t" style="left:1216.02px;top:796.00px;font-size:21px;line-height:24px;color:#1F1F1F;font-family:'DejaVu Sans Condensed', 'DejaVu Sans', 'Liberation Sans', sans-serif;letter-spacing:0.446px;transform:scaleX(1.04);">Mar-26</span>
<span class="t" style="left:1493.85px;top:796.00px;font-size:21px;line-height:24px;color:#1F1F1F;font-family:'DejaVu Sans Condensed', 'DejaVu Sans', 'Liberation Sans', sans-serif;letter-spacing:-0.161px;transform:scaleX(1.04);">5,000</span>
<span class="t" style="left:1648.10px;top:796.00px;font-size:21px;line-height:24px;color:#1F1F1F;font-family:'DejaVu Sans Condensed', 'DejaVu Sans', 'Liberation Sans', sans-serif;letter-spacing:1.558px;transform:scaleX(1.04);">Yes</span>
<span class="t" style="left:1893.86px;top:795.00px;font-size:21px;line-height:24px;color:#000;font-family:'DejaVu Sans Condensed', 'DejaVu Sans', 'Liberation Sans', sans-serif;transform:scaleX(1.04);">-</span>
<span class="t" style="left:2038.85px;top:796.00px;font-size:21px;line-height:24px;color:#000;font-family:'DejaVu Sans Condensed', 'DejaVu Sans', 'Liberation Sans', sans-serif;letter-spacing:-0.161px;transform:scaleX(1.04);">2,500</span>
<span class="t" style="left:2207.85px;top:796.00px;font-size:21px;line-height:24px;color:#000;font-family:'DejaVu Sans Condensed', 'DejaVu Sans', 'Liberation Sans', sans-serif;letter-spacing:-0.161px;transform:scaleX(1.04);">2,500</span>
<span class="t" style="left:2400.86px;top:795.00px;font-size:21px;line-height:24px;color:#000;font-family:'DejaVu Sans Condensed', 'DejaVu Sans', 'Liberation Sans', sans-serif;transform:scaleX(1.04);">-</span>
<span class="t" style="left:2569.86px;top:795.00px;font-size:21px;line-height:24px;color:#000;font-family:'DejaVu Sans Condensed', 'DejaVu Sans', 'Liberation Sans', sans-serif;transform:scaleX(1.04);">-</span>
<span class="t" style="left:2738.86px;top:795.00px;font-size:21px;line-height:24px;color:#000;font-family:'DejaVu Sans Condensed', 'DejaVu Sans', 'Liberation Sans', sans-serif;transform:scaleX(1.04);">-</span>
<span class="t" style="left:141.56px;top:823.00px;font-size:21px;line-height:24px;color:#1F1F1F;font-family:'DejaVu Sans Condensed', 'DejaVu Sans', 'Liberation Sans', sans-serif;letter-spacing:-0.097px;transform:scaleX(1.04);">CRM &amp; Analytics Software Setup</span>
<span class="t" style="left:1016.24px;top:824.00px;font-size:21px;line-height:24px;color:#1F1F1F;font-family:'DejaVu Sans Condensed', 'DejaVu Sans', 'Liberation Sans', sans-serif;letter-spacing:0.423px;transform:scaleX(1.04);">Jan-26</span>
<span class="t" style="left:1216.02px;top:824.00px;font-size:21px;line-height:24px;color:#1F1F1F;font-family:'DejaVu Sans Condensed', 'DejaVu Sans', 'Liberation Sans', sans-serif;letter-spacing:0.446px;transform:scaleX(1.04);">Mar-26</span>
<span class="t" style="left:1493.85px;top:824.00px;font-size:21px;line-height:24px;color:#1F1F1F;font-family:'DejaVu Sans Condensed', 'DejaVu Sans', 'Liberation Sans', sans-serif;letter-spacing:-0.161px;transform:scaleX(1.04);">4,000</span>
<span class="t" style="left:1648.10px;top:824.00px;font-size:21px;line-height:24px;color:#1F1F1F;font-family:'DejaVu Sans Condensed', 'DejaVu Sans', 'Liberation Sans', sans-serif;letter-spacing:1.558px;transform:scaleX(1.04);">Yes</span>
<span class="t" style="left:1868.81px;top:824.00px;font-size:21px;line-height:24px;color:#000;font-family:'DejaVu Sans Condensed', 'DejaVu Sans', 'Liberation Sans', sans-serif;letter-spacing:0.089px;transform:scaleX(1.04);">1,333</span>
<span class="t" style="left:2037.81px;top:824.00px;font-size:21px;line-height:24px;color:#000;font-family:'DejaVu Sans Condensed', 'DejaVu Sans', 'Liberation Sans', sans-serif;letter-spacing:0.089px;transform:scaleX(1.04);">1,333</span>
<span class="t" style="left:2206.81px;top:824.00px;font-size:21px;line-height:24px;color:#000;font-family:'DejaVu Sans Condensed', 'DejaVu Sans', 'Liberation Sans', sans-serif;letter-spacing:0.089px;transform:scaleX(1.04);">1,333</span>
<span class="t" style="left:2400.86px;top:823.00px;font-size:21px;line-height:24px;color:#000;font-family:'DejaVu Sans Condensed', 'DejaVu Sans', 'Liberation Sans', sans-serif;transform:scaleX(1.04);">-</span>
<span class="t" style="left:2569.86px;top:823.00px;font-size:21px;line-height:24px;color:#000;font-family:'DejaVu Sans Condensed', 'DejaVu Sans', 'Liberation Sans', sans-serif;transform:scaleX(1.04);">-</span>
<span class="t" style="left:2738.86px;top:823.00px;font-size:21px;line-height:24px;color:#000;font-family:'DejaVu Sans Condensed', 'DejaVu Sans', 'Liberation Sans', sans-serif;transform:scaleX(1.04);">-</span>
<span class="t" style="left:142.56px;top:850.00px;font-size:21px;line-height:24px;color:#1F1F1F;font-family:'DejaVu Sans Condensed', 'DejaVu Sans', 'Liberation Sans', sans-serif;transform:scaleX(1.04);">-</span>
<span class="t" style="left:1648.10px;top:852.00px;font-size:21px;line-height:24px;color:#1F1F1F;font-family:'DejaVu Sans Condensed', 'DejaVu Sans', 'Liberation Sans', sans-serif;letter-spacing:1.558px;transform:scaleX(1.04);">Yes</span>
<span class="t" style="left:1893.86px;top:851.00px;font-size:21px;line-height:24px;color:#000;font-family:'DejaVu Sans Condensed', 'DejaVu Sans', 'Liberation Sans', sans-serif;transform:scaleX(1.04);">-</span>
<span class="t" style="left:2062.86px;top:851.00px;font-size:21px;line-height:24px;color:#000;font-family:'DejaVu Sans Condensed', 'DejaVu Sans', 'Liberation Sans', sans-serif;transform:scaleX(1.04);">-</span>
<span class="t" style="left:2231.86px;top:851.00px;font-size:21px;line-height:24px;color:#000;font-family:'DejaVu Sans Condensed', 'DejaVu Sans', 'Liberation Sans', sans-serif;transform:scaleX(1.04);">-</span>
<span class="t" style="left:2400.86px;top:851.00px;font-size:21px;line-height:24px;color:#000;font-family:'DejaVu Sans Condensed', 'DejaVu Sans', 'Liberation Sans', sans-serif;transform:scaleX(1.04);">-</span>
<span class="t" style="left:2569.86px;top:851.00px;font-size:21px;line-height:24px;color:#000;font-family:'DejaVu Sans Condensed', 'DejaVu Sans', 'Liberation Sans', sans-serif;transform:scaleX(1.04);">-</span>
<span class="t" style="left:2738.86px;top:851.00px;font-size:21px;line-height:24px;color:#000;font-family:'DejaVu Sans Condensed', 'DejaVu Sans', 'Liberation Sans', sans-serif;transform:scaleX(1.04);">-</span>
<span class="t" style="left:142.56px;top:878.00px;font-size:21px;line-height:24px;color:#1F1F1F;font-family:'DejaVu Sans Condensed', 'DejaVu Sans', 'Liberation Sans', sans-serif;transform:scaleX(1.04);">-</span>
<span class="t" style="left:1648.10px;top:880.00px;font-size:21px;line-height:24px;color:#1F1F1F;font-family:'DejaVu Sans Condensed', 'DejaVu Sans', 'Liberation Sans', sans-serif;letter-spacing:1.558px;transform:scaleX(1.04);">Yes</span>
<span class="t" style="left:1893.86px;top:879.00px;font-size:21px;line-height:24px;color:#000;font-family:'DejaVu Sans Condensed', 'DejaVu Sans', 'Liberation Sans', sans-serif;transform:scaleX(1.04);">-</span>
<span class="t" style="left:2062.86px;top:879.00px;font-size:21px;line-height:24px;color:#000;font-family:'DejaVu Sans Condensed', 'DejaVu Sans', 'Liberation Sans', sans-serif;transform:scaleX(1.04);">-</span>
<span class="t" style="left:2231.86px;top:879.00px;font-size:21px;line-height:24px;color:#000;font-family:'DejaVu Sans Condensed', 'DejaVu Sans', 'Liberation Sans', sans-serif;transform:scaleX(1.04);">-</span>
<span class="t" style="left:2400.86px;top:879.00px;font-size:21px;line-height:24px;color:#000;font-family:'DejaVu Sans Condensed', 'DejaVu Sans', 'Liberation Sans', sans-serif;transform:scaleX(1.04);">-</span>
<span class="t" style="left:2569.86px;top:879.00px;font-size:21px;line-height:24px;color:#000;font-family:'DejaVu Sans Condensed', 'DejaVu Sans', 'Liberation Sans', sans-serif;transform:scaleX(1.04);">-</span>
<span class="t" style="left:2738.86px;top:879.00px;font-size:21px;line-height:24px;color:#000;font-family:'DejaVu Sans Condensed', 'DejaVu Sans', 'Liberation Sans', sans-serif;transform:scaleX(1.04);">-</span>
<span class="t" style="left:142.56px;top:906.00px;font-size:21px;line-height:24px;color:#1F1F1F;font-family:'DejaVu Sans Condensed', 'DejaVu Sans', 'Liberation Sans', sans-serif;transform:scaleX(1.04);">-</span>
<span class="t" style="left:1648.10px;top:908.00px;font-size:21px;line-height:24px;color:#1F1F1F;font-family:'DejaVu Sans Condensed', 'DejaVu Sans', 'Liberation Sans', sans-serif;letter-spacing:1.558px;transform:scaleX(1.04);">Yes</span>
<span class="t" style="left:1893.86px;top:907.00px;font-size:21px;line-height:24px;color:#000;font-family:'DejaVu Sans Condensed', 'DejaVu Sans', 'Liberation Sans', sans-serif;transform:scaleX(1.04);">-</span>
<span class="t" style="left:2062.86px;top:907.00px;font-size:21px;line-height:24px;color:#000;font-family:'DejaVu Sans Condensed', 'DejaVu Sans', 'Liberation Sans', sans-serif;transform:scaleX(1.04);">-</span>
<span class="t" style="left:2231.86px;top:907.00px;font-size:21px;line-height:24px;color:#000;font-family:'DejaVu Sans Condensed', 'DejaVu Sans', 'Liberation Sans', sans-serif;transform:scaleX(1.04);">-</span>
<span class="t" style="left:2400.86px;top:907.00px;font-size:21px;line-height:24px;color:#000;font-family:'DejaVu Sans Condensed', 'DejaVu Sans', 'Liberation Sans', sans-serif;transform:scaleX(1.04);">-</span>
<span class="t" style="left:2569.86px;top:907.00px;font-size:21px;line-height:24px;color:#000;font-family:'DejaVu Sans Condensed', 'DejaVu Sans', 'Liberation Sans', sans-serif;transform:scaleX(1.04);">-</span>
<span class="t" style="left:2738.86px;top:907.00px;font-size:21px;line-height:24px;color:#000;font-family:'DejaVu Sans Condensed', 'DejaVu Sans', 'Liberation Sans', sans-serif;transform:scaleX(1.04);">-</span>
<span class="t" style="left:142.56px;top:934.00px;font-size:21px;line-height:24px;color:#1F1F1F;font-family:'DejaVu Sans Condensed', 'DejaVu Sans', 'Liberation Sans', sans-serif;transform:scaleX(1.04);">-</span>
<span class="t" style="left:1648.10px;top:936.00px;font-size:21px;line-height:24px;color:#1F1F1F;font-family:'DejaVu Sans Condensed', 'DejaVu Sans', 'Liberation Sans', sans-serif;letter-spacing:1.558px;transform:scaleX(1.04);">Yes</span>
<span class="t" style="left:1893.86px;top:935.00px;font-size:21px;line-height:24px;color:#000;font-family:'DejaVu Sans Condensed', 'DejaVu Sans', 'Liberation Sans', sans-serif;transform:scaleX(1.04);">-</span>
<span class="t" style="left:2062.86px;top:935.00px;font-size:21px;line-height:24px;color:#000;font-family:'DejaVu Sans Condensed', 'DejaVu Sans', 'Liberation Sans', sans-serif;transform:scaleX(1.04);">-</span>
<span class="t" style="left:2231.86px;top:935.00px;font-size:21px;line-height:24px;color:#000;font-family:'DejaVu Sans Condensed', 'DejaVu Sans', 'Liberation Sans', sans-serif;transform:scaleX(1.04);">-</span>
<span class="t" style="left:2400.86px;top:935.00px;font-size:21px;line-height:24px;color:#000;font-family:'DejaVu Sans Condensed', 'DejaVu Sans', 'Liberation Sans', sans-serif;transform:scaleX(1.04);">-</span>
<span class="t" style="left:2569.86px;top:935.00px;font-size:21px;line-height:24px;color:#000;font-family:'DejaVu Sans Condensed', 'DejaVu Sans', 'Liberation Sans', sans-serif;transform:scaleX(1.04);">-</span>
<span class="t" style="left:2738.86px;top:935.00px;font-size:21px;line-height:24px;color:#000;font-family:'DejaVu Sans Condensed', 'DejaVu Sans', 'Liberation Sans', sans-serif;transform:scaleX(1.04);">-</span>
<span class="t" style="left:142.56px;top:962.00px;font-size:21px;line-height:24px;color:#1F1F1F;font-family:'DejaVu Sans Condensed', 'DejaVu Sans', 'Liberation Sans', sans-serif;transform:scaleX(1.04);">-</span>
<span class="t" style="left:1648.10px;top:964.00px;font-size:21px;line-height:24px;color:#1F1F1F;font-family:'DejaVu Sans Condensed', 'DejaVu Sans', 'Liberation Sans', sans-serif;letter-spacing:1.558px;transform:scaleX(1.04);">Yes</span>
<span class="t" style="left:1893.86px;top:963.00px;font-size:21px;line-height:24px;color:#000;font-family:'DejaVu Sans Condensed', 'DejaVu Sans', 'Liberation Sans', sans-serif;transform:scaleX(1.04);">-</span>
<span class="t" style="left:2062.86px;top:963.00px;font-size:21px;line-height:24px;color:#000;font-family:'DejaVu Sans Condensed', 'DejaVu Sans', 'Liberation Sans', sans-serif;transform:scaleX(1.04);">-</span>
<span class="t" style="left:2231.86px;top:963.00px;font-size:21px;line-height:24px;color:#000;font-family:'DejaVu Sans Condensed', 'DejaVu Sans', 'Liberation Sans', sans-serif;transform:scaleX(1.04);">-</span>
<span class="t" style="left:2400.86px;top:963.00px;font-size:21px;line-height:24px;color:#000;font-family:'DejaVu Sans Condensed', 'DejaVu Sans', 'Liberation Sans', sans-serif;transform:scaleX(1.04);">-</span>
<span class="t" style="left:2569.86px;top:963.00px;font-size:21px;line-height:24px;color:#000;font-family:'DejaVu Sans Condensed', 'DejaVu Sans', 'Liberation Sans', sans-serif;transform:scaleX(1.04);">-</span>
<span class="t" style="left:2738.86px;top:963.00px;font-size:21px;line-height:24px;color:#000;font-family:'DejaVu Sans Condensed', 'DejaVu Sans', 'Liberation Sans', sans-serif;transform:scaleX(1.04);">-</span>
<span class="t" style="left:142.56px;top:990.00px;font-size:21px;line-height:24px;color:#1F1F1F;font-family:'DejaVu Sans Condensed', 'DejaVu Sans', 'Liberation Sans', sans-serif;transform:scaleX(1.04);">-</span>
<span class="t" style="left:1648.10px;top:992.00px;font-size:21px;line-height:24px;color:#1F1F1F;font-family:'DejaVu Sans Condensed', 'DejaVu Sans', 'Liberation Sans', sans-serif;letter-spacing:1.558px;transform:scaleX(1.04);">Yes</span>
<span class="t" style="left:1893.86px;top:991.00px;font-size:21px;line-height:24px;color:#000;font-family:'DejaVu Sans Condensed', 'DejaVu Sans', 'Liberation Sans', sans-serif;transform:scaleX(1.04);">-</span>
<span class="t" style="left:2062.86px;top:991.00px;font-size:21px;line-height:24px;color:#000;font-family:'DejaVu Sans Condensed', 'DejaVu Sans', 'Liberation Sans', sans-serif;transform:scaleX(1.04);">-</span>
<span class="t" style="left:2231.86px;top:991.00px;font-size:21px;line-height:24px;color:#000;font-family:'DejaVu Sans Condensed', 'DejaVu Sans', 'Liberation Sans', sans-serif;transform:scaleX(1.04);">-</span>
<span class="t" style="left:2400.86px;top:991.00px;font-size:21px;line-height:24px;color:#000;font-family:'DejaVu Sans Condensed', 'DejaVu Sans', 'Liberation Sans', sans-serif;transform:scaleX(1.04);">-</span>
<span class="t" style="left:2569.86px;top:991.00px;font-size:21px;line-height:24px;color:#000;font-family:'DejaVu Sans Condensed', 'DejaVu Sans', 'Liberation Sans', sans-serif;transform:scaleX(1.04);">-</span>
<span class="t" style="left:2738.86px;top:991.00px;font-size:21px;line-height:24px;color:#000;font-family:'DejaVu Sans Condensed', 'DejaVu Sans', 'Liberation Sans', sans-serif;transform:scaleX(1.04);">-</span>
<span class="t" style="left:142.56px;top:1018.00px;font-size:21px;line-height:24px;color:#1F1F1F;font-family:'DejaVu Sans Condensed', 'DejaVu Sans', 'Liberation Sans', sans-serif;transform:scaleX(1.04);">-</span>
<span class="t" style="left:1648.10px;top:1020.00px;font-size:21px;line-height:24px;color:#1F1F1F;font-family:'DejaVu Sans Condensed', 'DejaVu Sans', 'Liberation Sans', sans-serif;letter-spacing:1.558px;transform:scaleX(1.04);">Yes</span>
<span class="t" style="left:1893.86px;top:1019.00px;font-size:21px;line-height:24px;color:#000;font-family:'DejaVu Sans Condensed', 'DejaVu Sans', 'Liberation Sans', sans-serif;transform:scaleX(1.04);">-</span>
<span class="t" style="left:2062.86px;top:1019.00px;font-size:21px;line-height:24px;color:#000;font-family:'DejaVu Sans Condensed', 'DejaVu Sans', 'Liberation Sans', sans-serif;transform:scaleX(1.04);">-</span>
<span class="t" style="left:2231.86px;top:1019.00px;font-size:21px;line-height:24px;color:#000;font-family:'DejaVu Sans Condensed', 'DejaVu Sans', 'Liberation Sans', sans-serif;transform:scaleX(1.04);">-</span>
<span class="t" style="left:2400.86px;top:1019.00px;font-size:21px;line-height:24px;color:#000;font-family:'DejaVu Sans Condensed', 'DejaVu Sans', 'Liberation Sans', sans-serif;transform:scaleX(1.04);">-</span>
<span class="t" style="left:2569.86px;top:1019.00px;font-size:21px;line-height:24px;color:#000;font-family:'DejaVu Sans Condensed', 'DejaVu Sans', 'Liberation Sans', sans-serif;transform:scaleX(1.04);">-</span>
<span class="t" style="left:2738.86px;top:1019.00px;font-size:21px;line-height:24px;color:#000;font-family:'DejaVu Sans Condensed', 'DejaVu Sans', 'Liberation Sans', sans-serif;transform:scaleX(1.04);">-</span>
<span class="t" style="left:142.56px;top:1046.00px;font-size:21px;line-height:24px;color:#1F1F1F;font-family:'DejaVu Sans Condensed', 'DejaVu Sans', 'Liberation Sans', sans-serif;transform:scaleX(1.04);">-</span>
<span class="t" style="left:1648.10px;top:1048.00px;font-size:21px;line-height:24px;color:#1F1F1F;font-family:'DejaVu Sans Condensed', 'DejaVu Sans', 'Liberation Sans', sans-serif;letter-spacing:1.558px;transform:scaleX(1.04);">Yes</span>
<span class="t" style="left:1893.86px;top:1047.00px;font-size:21px;line-height:24px;color:#000;font-family:'DejaVu Sans Condensed', 'DejaVu Sans', 'Liberation Sans', sans-serif;transform:scaleX(1.04);">-</span>
<span class="t" style="left:2062.86px;top:1047.00px;font-size:21px;line-height:24px;color:#000;font-family:'DejaVu Sans Condensed', 'DejaVu Sans', 'Liberation Sans', sans-serif;transform:scaleX(1.04);">-</span>
<span class="t" style="left:2231.86px;top:1047.00px;font-size:21px;line-height:24px;color:#000;font-family:'DejaVu Sans Condensed', 'DejaVu Sans', 'Liberation Sans', sans-serif;transform:scaleX(1.04);">-</span>
<span class="t" style="left:2400.86px;top:1047.00px;font-size:21px;line-height:24px;color:#000;font-family:'DejaVu Sans Condensed', 'DejaVu Sans', 'Liberation Sans', sans-serif;transform:scaleX(1.04);">-</span>
<span class="t" style="left:2569.86px;top:1047.00px;font-size:21px;line-height:24px;color:#000;font-family:'DejaVu Sans Condensed', 'DejaVu Sans', 'Liberation Sans', sans-serif;transform:scaleX(1.04);">-</span>
<span class="t" style="left:2738.86px;top:1047.00px;font-size:21px;line-height:24px;color:#000;font-family:'DejaVu Sans Condensed', 'DejaVu Sans', 'Liberation Sans', sans-serif;transform:scaleX(1.04);">-</span>
<span class="t" style="left:142.56px;top:1074.00px;font-size:21px;line-height:24px;color:#1F1F1F;font-family:'DejaVu Sans Condensed', 'DejaVu Sans', 'Liberation Sans', sans-serif;transform:scaleX(1.04);">-</span>
<span class="t" style="left:1648.10px;top:1076.00px;font-size:21px;line-height:24px;color:#1F1F1F;font-family:'DejaVu Sans Condensed', 'DejaVu Sans', 'Liberation Sans', sans-serif;letter-spacing:1.558px;transform:scaleX(1.04);">Yes</span>
<span class="t" style="left:1893.86px;top:1075.00px;font-size:21px;line-height:24px;color:#000;font-family:'DejaVu Sans Condensed', 'DejaVu Sans', 'Liberation Sans', sans-serif;transform:scaleX(1.04);">-</span>
<span class="t" style="left:2062.86px;top:1075.00px;font-size:21px;line-height:24px;color:#000;font-family:'DejaVu Sans Condensed', 'DejaVu Sans', 'Liberation Sans', sans-serif;transform:scaleX(1.04);">-</span>
<span class="t" style="left:2231.86px;top:1075.00px;font-size:21px;line-height:24px;color:#000;font-family:'DejaVu Sans Condensed', 'DejaVu Sans', 'Liberation Sans', sans-serif;transform:scaleX(1.04);">-</span>
<span class="t" style="left:2400.86px;top:1075.00px;font-size:21px;line-height:24px;color:#000;font-family:'DejaVu Sans Condensed', 'DejaVu Sans', 'Liberation Sans', sans-serif;transform:scaleX(1.04);">-</span>
<span class="t" style="left:2569.86px;top:1075.00px;font-size:21px;line-height:24px;color:#000;font-family:'DejaVu Sans Condensed', 'DejaVu Sans', 'Liberation Sans', sans-serif;transform:scaleX(1.04);">-</span>
<span class="t" style="left:2738.86px;top:1075.00px;font-size:21px;line-height:24px;color:#000;font-family:'DejaVu Sans Condensed', 'DejaVu Sans', 'Liberation Sans', sans-serif;transform:scaleX(1.04);">-</span>
<span class="t" style="left:142.56px;top:1102.00px;font-size:21px;line-height:24px;color:#1F1F1F;font-family:'DejaVu Sans Condensed', 'DejaVu Sans', 'Liberation Sans', sans-serif;transform:scaleX(1.04);">-</span>
<span class="t" style="left:1648.10px;top:1104.00px;font-size:21px;line-height:24px;color:#1F1F1F;font-family:'DejaVu Sans Condensed', 'DejaVu Sans', 'Liberation Sans', sans-serif;letter-spacing:1.558px;transform:scaleX(1.04);">Yes</span>
<span class="t" style="left:1893.86px;top:1103.00px;font-size:21px;line-height:24px;color:#000;font-family:'DejaVu Sans Condensed', 'DejaVu Sans', 'Liberation Sans', sans-serif;transform:scaleX(1.04);">-</span>
<span class="t" style="left:2062.86px;top:1103.00px;font-size:21px;line-height:24px;color:#000;font-family:'DejaVu Sans Condensed', 'DejaVu Sans', 'Liberation Sans', sans-serif;transform:scaleX(1.04);">-</span>
<span class="t" style="left:2231.86px;top:1103.00px;font-size:21px;line-height:24px;color:#000;font-family:'DejaVu Sans Condensed', 'DejaVu Sans', 'Liberation Sans', sans-serif;transform:scaleX(1.04);">-</span>
<span class="t" style="left:2400.86px;top:1103.00px;font-size:21px;line-height:24px;color:#000;font-family:'DejaVu Sans Condensed', 'DejaVu Sans', 'Liberation Sans', sans-serif;transform:scaleX(1.04);">-</span>
<span class="t" style="left:2569.86px;top:1103.00px;font-size:21px;line-height:24px;color:#000;font-family:'DejaVu Sans Condensed', 'DejaVu Sans', 'Liberation Sans', sans-serif;transform:scaleX(1.04);">-</span>
<span class="t" style="left:2738.86px;top:1103.00px;font-size:21px;line-height:24px;color:#000;font-family:'DejaVu Sans Condensed', 'DejaVu Sans', 'Liberation Sans', sans-serif;transform:scaleX(1.04);">-</span>
<span class="t" style="left:142.56px;top:1130.00px;font-size:21px;line-height:24px;color:#1F1F1F;font-family:'DejaVu Sans Condensed', 'DejaVu Sans', 'Liberation Sans', sans-serif;transform:scaleX(1.04);">-</span>
<span class="t" style="left:1648.10px;top:1132.00px;font-size:21px;line-height:24px;color:#1F1F1F;font-family:'DejaVu Sans Condensed', 'DejaVu Sans', 'Liberation Sans', sans-serif;letter-spacing:1.558px;transform:scaleX(1.04);">Yes</span>
<span class="t" style="left:1893.86px;top:1131.00px;font-size:21px;line-height:24px;color:#000;font-family:'DejaVu Sans Condensed', 'DejaVu Sans', 'Liberation Sans', sans-serif;transform:scaleX(1.04);">-</span>
<span class="t" style="left:2062.86px;top:1131.00px;font-size:21px;line-height:24px;color:#000;font-family:'DejaVu Sans Condensed', 'DejaVu Sans', 'Liberation Sans', sans-serif;transform:scaleX(1.04);">-</span>
<span class="t" style="left:2231.86px;top:1131.00px;font-size:21px;line-height:24px;color:#000;font-family:'DejaVu Sans Condensed', 'DejaVu Sans', 'Liberation Sans', sans-serif;transform:scaleX(1.04);">-</span>
<span class="t" style="left:2400.86px;top:1131.00px;font-size:21px;line-height:24px;color:#000;font-family:'DejaVu Sans Condensed', 'DejaVu Sans', 'Liberation Sans', sans-serif;transform:scaleX(1.04);">-</span>
<span class="t" style="left:2569.86px;top:1131.00px;font-size:21px;line-height:24px;color:#000;font-family:'DejaVu Sans Condensed', 'DejaVu Sans', 'Liberation Sans', sans-serif;transform:scaleX(1.04);">-</span>
<span class="t" style="left:2738.86px;top:1131.00px;font-size:21px;line-height:24px;color:#000;font-family:'DejaVu Sans Condensed', 'DejaVu Sans', 'Liberation Sans', sans-serif;transform:scaleX(1.04);">-</span>
<span class="t" style="left:142.56px;top:1158.00px;font-size:21px;line-height:24px;color:#1F1F1F;font-family:'DejaVu Sans Condensed', 'DejaVu Sans', 'Liberation Sans', sans-serif;transform:scaleX(1.04);">-</span>
<span class="t" style="left:1648.10px;top:1160.00px;font-size:21px;line-height:24px;color:#1F1F1F;font-family:'DejaVu Sans Condensed', 'DejaVu Sans', 'Liberation Sans', sans-serif;letter-spacing:1.558px;transform:scaleX(1.04);">Yes</span>
<span class="t" style="left:1893.86px;top:1159.00px;font-size:21px;line-height:24px;color:#000;font-family:'DejaVu Sans Condensed', 'DejaVu Sans', 'Liberation Sans', sans-serif;transform:scaleX(1.04);">-</span>
<span class="t" style="left:2062.86px;top:1159.00px;font-size:21px;line-height:24px;color:#000;font-family:'DejaVu Sans Condensed', 'DejaVu Sans', 'Liberation Sans', sans-serif;transform:scaleX(1.04);">-</span>
<span class="t" style="left:2231.86px;top:1159.00px;font-size:21px;line-height:24px;color:#000;font-family:'DejaVu Sans Condensed', 'DejaVu Sans', 'Liberation Sans', sans-serif;transform:scaleX(1.04);">-</span>
<span class="t" style="left:2400.86px;top:1159.00px;font-size:21px;line-height:24px;color:#000;font-family:'DejaVu Sans Condensed', 'DejaVu Sans', 'Liberation Sans', sans-serif;transform:scaleX(1.04);">-</span>
<span class="t" style="left:2569.86px;top:1159.00px;font-size:21px;line-height:24px;color:#000;font-family:'DejaVu Sans Condensed', 'DejaVu Sans', 'Liberation Sans', sans-serif;transform:scaleX(1.04);">-</span>
<span class="t" style="left:2738.86px;top:1159.00px;font-size:21px;line-height:24px;color:#000;font-family:'DejaVu Sans Condensed', 'DejaVu Sans', 'Liberation Sans', sans-serif;transform:scaleX(1.04);">-</span>
<span class="t" style="left:142.56px;top:1186.00px;font-size:21px;line-height:24px;color:#1F1F1F;font-family:'DejaVu Sans Condensed', 'DejaVu Sans', 'Liberation Sans', sans-serif;transform:scaleX(1.04);">-</span>
<span class="t" style="left:1648.10px;top:1188.00px;font-size:21px;line-height:24px;color:#1F1F1F;font-family:'DejaVu Sans Condensed', 'DejaVu Sans', 'Liberation Sans', sans-serif;letter-spacing:1.558px;transform:scaleX(1.04);">Yes</span>
<span class="t" style="left:1893.86px;top:1187.00px;font-size:21px;line-height:24px;color:#000;font-family:'DejaVu Sans Condensed', 'DejaVu Sans', 'Liberation Sans', sans-serif;transform:scaleX(1.04);">-</span>
<span class="t" style="left:2062.86px;top:1187.00px;font-size:21px;line-height:24px;color:#000;font-family:'DejaVu Sans Condensed', 'DejaVu Sans', 'Liberation Sans', sans-serif;transform:scaleX(1.04);">-</span>
<span class="t" style="left:2231.86px;top:1187.00px;font-size:21px;line-height:24px;color:#000;font-family:'DejaVu Sans Condensed', 'DejaVu Sans', 'Liberation Sans', sans-serif;transform:scaleX(1.04);">-</span>
<span class="t" style="left:2400.86px;top:1187.00px;font-size:21px;line-height:24px;color:#000;font-family:'DejaVu Sans Condensed', 'DejaVu Sans', 'Liberation Sans', sans-serif;transform:scaleX(1.04);">-</span>
<span class="t" style="left:2569.86px;top:1187.00px;font-size:21px;line-height:24px;color:#000;font-family:'DejaVu Sans Condensed', 'DejaVu Sans', 'Liberation Sans', sans-serif;transform:scaleX(1.04);">-</span>
<span class="t" style="left:2738.86px;top:1187.00px;font-size:21px;line-height:24px;color:#000;font-family:'DejaVu Sans Condensed', 'DejaVu Sans', 'Liberation Sans', sans-serif;transform:scaleX(1.04);">-</span>
<span class="t" style="left:144.60px;top:1216.00px;font-size:26.2px;line-height:30px;color:#fff;font-family:'DejaVu Sans Condensed', 'DejaVu Sans', 'Liberation Sans', sans-serif;font-weight:700;-webkit-text-stroke:0.3px;letter-spacing:1.231px;transform:scaleX(1.04);">Total</span>
<span class="t" style="left:1468.51px;top:1219.00px;font-size:21px;line-height:24px;color:#fff;font-family:'DejaVu Sans Condensed', 'DejaVu Sans', 'Liberation Sans', sans-serif;font-weight:700;-webkit-text-stroke:0.3px;letter-spacing:0.348px;transform:scaleX(1.04);">69,000</span>
<span class="t" style="left:1844.51px;top:1219.00px;font-size:21px;line-height:24px;color:#fff;font-family:'DejaVu Sans Condensed', 'DejaVu Sans', 'Liberation Sans', sans-serif;font-weight:700;-webkit-text-stroke:0.3px;letter-spacing:0.348px;transform:scaleX(1.04);">32,667</span>
<span class="t" style="left:2012.47px;top:1219.00px;font-size:21px;line-height:24px;color:#fff;font-family:'DejaVu Sans Condensed', 'DejaVu Sans', 'Liberation Sans', sans-serif;font-weight:700;-webkit-text-stroke:0.3px;letter-spacing:0.548px;transform:scaleX(1.04);">15,167</span>
<span class="t" style="left:2181.47px;top:1219.00px;font-size:21px;line-height:24px;color:#fff;font-family:'DejaVu Sans Condensed', 'DejaVu Sans', 'Liberation Sans', sans-serif;font-weight:700;-webkit-text-stroke:0.3px;letter-spacing:0.548px;transform:scaleX(1.04);">11,167</span>
<span class="t" style="left:2365.78px;top:1219.00px;font-size:21px;line-height:24px;color:#fff;font-family:'DejaVu Sans Condensed', 'DejaVu Sans', 'Liberation Sans', sans-serif;font-weight:700;-webkit-text-stroke:0.3px;letter-spacing:0.505px;transform:scaleX(1.04);">3,333</span>
<span class="t" style="left:2534.78px;top:1219.00px;font-size:21px;line-height:24px;color:#fff;font-family:'DejaVu Sans Condensed', 'DejaVu Sans', 'Liberation Sans', sans-serif;font-weight:700;-webkit-text-stroke:0.3px;letter-spacing:0.505px;transform:scaleX(1.04);">3,333</span>
<span class="t" style="left:2703.78px;top:1219.00px;font-size:21px;line-height:24px;color:#fff;font-family:'DejaVu Sans Condensed', 'DejaVu Sans', 'Liberation Sans', sans-serif;font-weight:700;-webkit-text-stroke:0.3px;letter-spacing:0.505px;transform:scaleX(1.04);">3,333</span>
<span class="t" style="left:143.86px;top:1376.00px;font-size:21px;line-height:24px;color:#fff;font-family:'DejaVu Sans Condensed', 'DejaVu Sans', 'Liberation Sans', sans-serif;font-weight:700;-webkit-text-stroke:0.3px;letter-spacing:-0.054px;transform:scaleX(1.04);">Opening Net Book Value</span>
<span class="t" style="left:1886.32px;top:1375.00px;font-size:21px;line-height:24px;color:#fff;font-family:'DejaVu Sans Condensed', 'DejaVu Sans', 'Liberation Sans', sans-serif;font-weight:700;-webkit-text-stroke:0.3px;letter-spacing:0.105px;transform:scaleX(1.04);">-</span>
<span class="t" style="left:2013.51px;top:1376.00px;font-size:21px;line-height:24px;color:#fff;font-family:'DejaVu Sans Condensed', 'DejaVu Sans', 'Liberation Sans', sans-serif;font-weight:700;-webkit-text-stroke:0.3px;letter-spacing:0.348px;transform:scaleX(1.04);">32,394</span>
<span class="t" style="left:2182.51px;top:1376.00px;font-size:21px;line-height:24px;color:#fff;font-family:'DejaVu Sans Condensed', 'DejaVu Sans', 'Liberation Sans', sans-serif;font-weight:700;-webkit-text-stroke:0.3px;letter-spacing:0.348px;transform:scaleX(1.04);">47,163</span>
<span class="t" style="left:2351.51px;top:1376.00px;font-size:21px;line-height:24px;color:#fff;font-family:'DejaVu Sans Condensed', 'DejaVu Sans', 'Liberation Sans', sans-serif;font-weight:700;-webkit-text-stroke:0.3px;letter-spacing:0.348px;transform:scaleX(1.04);">57,838</span>
<span class="t" style="left:2520.51px;top:1376.00px;font-size:21px;line-height:24px;color:#fff;font-family:'DejaVu Sans Condensed', 'DejaVu Sans', 'Liberation Sans', sans-serif;font-weight:700;-webkit-text-stroke:0.3px;letter-spacing:0.348px;transform:scaleX(1.04);">60,651</span>
<span class="t" style="left:2689.51px;top:1376.00px;font-size:21px;line-height:24px;color:#fff;font-family:'DejaVu Sans Condensed', 'DejaVu Sans', 'Liberation Sans', sans-serif;font-weight:700;-webkit-text-stroke:0.3px;letter-spacing:0.348px;transform:scaleX(1.04);">63,438</span>
<span class="t" style="left:163.12px;top:1403.00px;font-size:21px;line-height:24px;color:#000;font-family:'DejaVu Sans Condensed', 'DejaVu Sans', 'Liberation Sans', sans-serif;letter-spacing:-0.219px;transform:scaleX(1.04);">Expenditure - Amortizable</span>
<span class="t" style="left:1724.86px;top:1404.00px;font-size:21px;line-height:24px;color:#000;font-family:'DejaVu Sans Condensed', 'DejaVu Sans', 'Liberation Sans', sans-serif;transform:scaleX(1.04);">-</span>
<span class="t" style="left:1857.62px;top:1405.00px;font-size:21px;line-height:24px;color:#000;font-family:'DejaVu Sans Condensed', 'DejaVu Sans', 'Liberation Sans', sans-serif;letter-spacing:-0.177px;transform:scaleX(1.04);">32,667</span>
<span class="t" style="left:2025.58px;top:1405.00px;font-size:21px;line-height:24px;color:#000;font-family:'DejaVu Sans Condensed', 'DejaVu Sans', 'Liberation Sans', sans-serif;letter-spacing:0.023px;transform:scaleX(1.04);">15,167</span>
<span class="t" style="left:2194.58px;top:1405.00px;font-size:21px;line-height:24px;color:#000;font-family:'DejaVu Sans Condensed', 'DejaVu Sans', 'Liberation Sans', sans-serif;letter-spacing:0.023px;transform:scaleX(1.04);">11,167</span>
<span class="t" style="left:2376.85px;top:1405.00px;font-size:21px;line-height:24px;color:#000;font-family:'DejaVu Sans Condensed', 'DejaVu Sans', 'Liberation Sans', sans-serif;letter-spacing:-0.161px;transform:scaleX(1.04);">3,333</span>
<span class="t" style="left:2545.85px;top:1405.00px;font-size:21px;line-height:24px;color:#000;font-family:'DejaVu Sans Condensed', 'DejaVu Sans', 'Liberation Sans', sans-serif;letter-spacing:-0.161px;transform:scaleX(1.04);">3,333</span>
<span class="t" style="left:2714.85px;top:1405.00px;font-size:21px;line-height:24px;color:#000;font-family:'DejaVu Sans Condensed', 'DejaVu Sans', 'Liberation Sans', sans-serif;letter-spacing:-0.161px;transform:scaleX(1.04);">3,333</span>
<span class="t" style="left:163.12px;top:1431.00px;font-size:21px;line-height:24px;color:#000;font-family:'DejaVu Sans Condensed', 'DejaVu Sans', 'Liberation Sans', sans-serif;letter-spacing:0.060px;transform:scaleX(1.04);">Depreciation (Depreciation Period (Years) - 10)</span>
<span class="t" style="left:1888.87px;top:1433.00px;font-size:21px;line-height:24px;color:#000;font-family:'DejaVu Sans Condensed', 'DejaVu Sans', 'Liberation Sans', sans-serif;letter-spacing:0.034px;transform:scaleX(1.04);">272</span>
<span class="t" style="left:2057.87px;top:1433.00px;font-size:21px;line-height:24px;color:#000;font-family:'DejaVu Sans Condensed', 'DejaVu Sans', 'Liberation Sans', sans-serif;letter-spacing:-0.466px;transform:scaleX(1.04);">399</span>
<span class="t" style="left:2226.87px;top:1433.00px;font-size:21px;line-height:24px;color:#000;font-family:'DejaVu Sans Condensed', 'DejaVu Sans', 'Liberation Sans', sans-serif;letter-spacing:0.034px;transform:scaleX(1.04);">492</span>
<span class="t" style="left:2395.87px;top:1433.00px;font-size:21px;line-height:24px;color:#000;font-family:'DejaVu Sans Condensed', 'DejaVu Sans', 'Liberation Sans', sans-serif;letter-spacing:-0.466px;transform:scaleX(1.04);">519</span>
<span class="t" style="left:2564.87px;top:1433.00px;font-size:21px;line-height:24px;color:#000;font-family:'DejaVu Sans Condensed', 'DejaVu Sans', 'Liberation Sans', sans-serif;letter-spacing:-0.466px;transform:scaleX(1.04);">547</span>
<span class="t" style="left:2733.87px;top:1433.00px;font-size:21px;line-height:24px;color:#000;font-family:'DejaVu Sans Condensed', 'DejaVu Sans', 'Liberation Sans', sans-serif;letter-spacing:-0.466px;transform:scaleX(1.04);">575</span>
<span class="t" style="left:143.86px;top:1461.00px;font-size:21px;line-height:24px;color:#fff;font-family:'DejaVu Sans Condensed', 'DejaVu Sans', 'Liberation Sans', sans-serif;font-weight:700;-webkit-text-stroke:0.3px;letter-spacing:-0.006px;transform:scaleX(1.04);">Closing Net Book Value</span>
<span class="t" style="left:1717.32px;top:1460.00px;font-size:21px;line-height:24px;color:#fff;font-family:'DejaVu Sans Condensed', 'DejaVu Sans', 'Liberation Sans', sans-serif;font-weight:700;-webkit-text-stroke:0.3px;letter-spacing:0.105px;transform:scaleX(1.04);">-</span>
<span class="t" style="left:1844.51px;top:1461.00px;font-size:21px;line-height:24px;color:#fff;font-family:'DejaVu Sans Condensed', 'DejaVu Sans', 'Liberation Sans', sans-serif;font-weight:700;-webkit-text-stroke:0.3px;letter-spacing:0.348px;transform:scaleX(1.04);">32,394</span>
<span class="t" style="left:2013.51px;top:1461.00px;font-size:21px;line-height:24px;color:#fff;font-family:'DejaVu Sans Condensed', 'DejaVu Sans', 'Liberation Sans', sans-serif;font-weight:700;-webkit-text-stroke:0.3px;letter-spacing:0.348px;transform:scaleX(1.04);">47,163</span>
<span class="t" style="left:2182.51px;top:1461.00px;font-size:21px;line-height:24px;color:#fff;font-family:'DejaVu Sans Condensed', 'DejaVu Sans', 'Liberation Sans', sans-serif;font-weight:700;-webkit-text-stroke:0.3px;letter-spacing:0.348px;transform:scaleX(1.04);">57,838</span>
<span class="t" style="left:2351.51px;top:1461.00px;font-size:21px;line-height:24px;color:#fff;font-family:'DejaVu Sans Condensed', 'DejaVu Sans', 'Liberation Sans', sans-serif;font-weight:700;-webkit-text-stroke:0.3px;letter-spacing:0.348px;transform:scaleX(1.04);">60,651</span>
<span class="t" style="left:2520.51px;top:1461.00px;font-size:21px;line-height:24px;color:#fff;font-family:'DejaVu Sans Condensed', 'DejaVu Sans', 'Liberation Sans', sans-serif;font-weight:700;-webkit-text-stroke:0.3px;letter-spacing:0.348px;transform:scaleX(1.04);">63,438</span>
<span class="t" style="left:2689.51px;top:1461.00px;font-size:21px;line-height:24px;color:#fff;font-family:'DejaVu Sans Condensed', 'DejaVu Sans', 'Liberation Sans', sans-serif;font-weight:700;-webkit-text-stroke:0.3px;letter-spacing:0.348px;transform:scaleX(1.04);">66,196</span>
<span class="t" style="left:143.86px;top:1531.00px;font-size:21px;line-height:24px;color:#fff;font-family:'DejaVu Sans Condensed', 'DejaVu Sans', 'Liberation Sans', sans-serif;font-weight:700;-webkit-text-stroke:0.3px;letter-spacing:-0.054px;transform:scaleX(1.04);">Opening Net Book Value</span>
<span class="t" style="left:1886.32px;top:1530.00px;font-size:21px;line-height:24px;color:#fff;font-family:'DejaVu Sans Condensed', 'DejaVu Sans', 'Liberation Sans', sans-serif;font-weight:700;-webkit-text-stroke:0.3px;letter-spacing:0.105px;transform:scaleX(1.04);">-</span>
<span class="t" style="left:2055.32px;top:1530.00px;font-size:21px;line-height:24px;color:#fff;font-family:'DejaVu Sans Condensed', 'DejaVu Sans', 'Liberation Sans', sans-serif;font-weight:700;-webkit-text-stroke:0.3px;letter-spacing:0.105px;transform:scaleX(1.04);">-</span>
<span class="t" style="left:2224.32px;top:1530.00px;font-size:21px;line-height:24px;color:#fff;font-family:'DejaVu Sans Condensed', 'DejaVu Sans', 'Liberation Sans', sans-serif;font-weight:700;-webkit-text-stroke:0.3px;letter-spacing:0.105px;transform:scaleX(1.04);">-</span>
<span class="t" style="left:2393.32px;top:1530.00px;font-size:21px;line-height:24px;color:#fff;font-family:'DejaVu Sans Condensed', 'DejaVu Sans', 'Liberation Sans', sans-serif;font-weight:700;-webkit-text-stroke:0.3px;letter-spacing:0.105px;transform:scaleX(1.04);">-</span>
<span class="t" style="left:2562.32px;top:1530.00px;font-size:21px;line-height:24px;color:#fff;font-family:'DejaVu Sans Condensed', 'DejaVu Sans', 'Liberation Sans', sans-serif;font-weight:700;-webkit-text-stroke:0.3px;letter-spacing:0.105px;transform:scaleX(1.04);">-</span>
<span class="t" style="left:2731.32px;top:1530.00px;font-size:21px;line-height:24px;color:#fff;font-family:'DejaVu Sans Condensed', 'DejaVu Sans', 'Liberation Sans', sans-serif;font-weight:700;-webkit-text-stroke:0.3px;letter-spacing:0.105px;transform:scaleX(1.04);">-</span>
<span class="t" style="left:163.12px;top:1557.00px;font-size:21px;line-height:24px;color:#000;font-family:'DejaVu Sans Condensed', 'DejaVu Sans', 'Liberation Sans', sans-serif;letter-spacing:-0.145px;transform:scaleX(1.04);">Expenditure - Non-Amortizable</span>
<span class="t" style="left:1893.86px;top:1558.00px;font-size:21px;line-height:24px;color:#000;font-family:'DejaVu Sans Condensed', 'DejaVu Sans', 'Liberation Sans', sans-serif;transform:scaleX(1.04);">-</span>
<span class="t" style="left:2062.86px;top:1558.00px;font-size:21px;line-height:24px;color:#000;font-family:'DejaVu Sans Condensed', 'DejaVu Sans', 'Liberation Sans', sans-serif;transform:scaleX(1.04);">-</span>
<span class="t" style="left:2231.86px;top:1558.00px;font-size:21px;line-height:24px;color:#000;font-family:'DejaVu Sans Condensed', 'DejaVu Sans', 'Liberation Sans', sans-serif;transform:scaleX(1.04);">-</span>
<span class="t" style="left:2400.86px;top:1558.00px;font-size:21px;line-height:24px;color:#000;font-family:'DejaVu Sans Condensed', 'DejaVu Sans', 'Liberation Sans', sans-serif;transform:scaleX(1.04);">-</span>
<span class="t" style="left:2569.86px;top:1558.00px;font-size:21px;line-height:24px;color:#000;font-family:'DejaVu Sans Condensed', 'DejaVu Sans', 'Liberation Sans', sans-serif;transform:scaleX(1.04);">-</span>
<span class="t" style="left:2738.86px;top:1558.00px;font-size:21px;line-height:24px;color:#000;font-family:'DejaVu Sans Condensed', 'DejaVu Sans', 'Liberation Sans', sans-serif;transform:scaleX(1.04);">-</span>
<span class="t" style="left:143.86px;top:1587.00px;font-size:21px;line-height:24px;color:#fff;font-family:'DejaVu Sans Condensed', 'DejaVu Sans', 'Liberation Sans', sans-serif;font-weight:700;-webkit-text-stroke:0.3px;letter-spacing:-0.006px;transform:scaleX(1.04);">Closing Net Book Value</span>
<span class="t" style="left:1886.32px;top:1586.00px;font-size:21px;line-height:24px;color:#fff;font-family:'DejaVu Sans Condensed', 'DejaVu Sans', 'Liberation Sans', sans-serif;font-weight:700;-webkit-text-stroke:0.3px;letter-spacing:0.105px;transform:scaleX(1.04);">-</span>
<span class="t" style="left:2055.32px;top:1586.00px;font-size:21px;line-height:24px;color:#fff;font-family:'DejaVu Sans Condensed', 'DejaVu Sans', 'Liberation Sans', sans-serif;font-weight:700;-webkit-text-stroke:0.3px;letter-spacing:0.105px;transform:scaleX(1.04);">-</span>
<span class="t" style="left:2224.32px;top:1586.00px;font-size:21px;line-height:24px;color:#fff;font-family:'DejaVu Sans Condensed', 'DejaVu Sans', 'Liberation Sans', sans-serif;font-weight:700;-webkit-text-stroke:0.3px;letter-spacing:0.105px;transform:scaleX(1.04);">-</span>
<span class="t" style="left:2393.32px;top:1586.00px;font-size:21px;line-height:24px;color:#fff;font-family:'DejaVu Sans Condensed', 'DejaVu Sans', 'Liberation Sans', sans-serif;font-weight:700;-webkit-text-stroke:0.3px;letter-spacing:0.105px;transform:scaleX(1.04);">-</span>
<span class="t" style="left:2562.32px;top:1586.00px;font-size:21px;line-height:24px;color:#fff;font-family:'DejaVu Sans Condensed', 'DejaVu Sans', 'Liberation Sans', sans-serif;font-weight:700;-webkit-text-stroke:0.3px;letter-spacing:0.105px;transform:scaleX(1.04);">-</span>
<span class="t" style="left:2731.32px;top:1586.00px;font-size:21px;line-height:24px;color:#fff;font-family:'DejaVu Sans Condensed', 'DejaVu Sans', 'Liberation Sans', sans-serif;font-weight:700;-webkit-text-stroke:0.3px;letter-spacing:0.105px;transform:scaleX(1.04);">-</span>
<span class="t" style="left:38.00px;top:41.00px;font-size:11.5px;line-height:12px;color:#FFFFFF;font-weight:700;letter-spacing:-0.138px;">X</span>
<span class="t" style="left:94.50px;top:38.00px;font-size:17.6px;line-height:20px;color:#FFFFFF;letter-spacing:-0.065px;">sex-toys.xlsx  -  Read-Only</span>
<span class="t" style="left:41.50px;top:96.00px;font-size:19.4px;line-height:22px;color:#FFFFFF;letter-spacing:-0.200px;">File</span>
<span class="t" style="left:110.70px;top:96.00px;font-size:19.4px;line-height:22px;color:#FFFFFF;font-weight:700;letter-spacing:0.900px;">Home</span>
<span class="t" style="left:196.40px;top:96.00px;font-size:19.4px;line-height:22px;color:#FFFFFF;letter-spacing:0.220px;">Insert</span>
<span class="t" style="left:276.30px;top:96.00px;font-size:19.4px;line-height:22px;color:#FFFFFF;letter-spacing:0.300px;">Draw</span>
<span class="t" style="left:352.00px;top:96.00px;font-size:19.4px;line-height:22px;color:#FFFFFF;letter-spacing:-0.240px;">Page Layout</span>
<span class="t" style="left:490.00px;top:96.00px;font-size:19.4px;line-height:22px;color:#FFFFFF;letter-spacing:0.143px;">Formulas</span>
<span class="t" style="left:599.60px;top:96.00px;font-size:19.4px;line-height:22px;color:#FFFFFF;letter-spacing:-0.067px;">Data</span>
<span class="t" style="left:670.70px;top:96.00px;font-size:19.4px;line-height:22px;color:#FFFFFF;letter-spacing:-0.840px;">Review</span>
<span class="t" style="left:762.20px;top:96.00px;font-size:19.4px;line-height:22px;color:#FFFFFF;letter-spacing:-0.467px;">View</span>
<span class="t" style="left:834.40px;top:96.00px;font-size:19.4px;line-height:22px;color:#FFFFFF;letter-spacing:0.586px;">Automate</span>
<span class="t" style="left:950.70px;top:96.00px;font-size:19.4px;line-height:22px;color:#FFFFFF;letter-spacing:0.433px;">Help</span>
<span class="t" style="left:2651.80px;top:95.00px;font-size:19.4px;line-height:22px;color:#FFFFFF;letter-spacing:0.171px;">Comments</span>
<span class="t" style="left:2798.60px;top:95.00px;font-size:19.4px;line-height:22px;color:#0A0A0A;letter-spacing:-0.450px;">Share</span>
<span class="t" style="left:108.40px;top:254.00px;font-size:15.6px;line-height:17px;color:#F2F2F2;letter-spacing:0.325px;">Clipboard</span>
<span class="t" style="left:429.30px;top:254.00px;font-size:15.6px;line-height:17px;color:#F2F2F2;letter-spacing:0.233px;">Font</span>
<span class="t" style="left:810.00px;top:254.00px;font-size:15.6px;line-height:17px;color:#F2F2F2;letter-spacing:0.375px;">Alignment</span>
<span class="t" style="left:1162.40px;top:254.00px;font-size:15.6px;line-height:17px;color:#F2F2F2;letter-spacing:0.580px;">Number</span>
<span class="t" style="left:1417.30px;top:255.00px;font-size:15.6px;line-height:17px;color:#F2F2F2;letter-spacing:-0.225px;">Cells</span>
<span class="t" style="left:1681.70px;top:255.00px;font-size:15.6px;line-height:17px;color:#F2F2F2;letter-spacing:0.217px;">Editing</span>
<span class="t" style="left:1888.00px;top:255.00px;font-size:15.6px;line-height:17px;color:#F2F2F2;letter-spacing:0.167px;">Add-ins</span>
<span class="t" style="left:51.00px;top:194.00px;font-size:17.6px;line-height:20px;color:#8C8C8C;letter-spacing:-0.750px;">Paste</span>
<span class="t" style="left:141.60px;top:143.00px;font-size:17.6px;line-height:20px;color:#FFFFFF;letter-spacing:0.200px;">Cut</span>
<span class="t" style="left:141.40px;top:182.00px;font-size:17.6px;line-height:20px;color:#FFFFFF;letter-spacing:0.367px;">Copy</span>
<span class="t" style="left:141.40px;top:221.00px;font-size:17.6px;line-height:20px;color:#FFFFFF;letter-spacing:-0.031px;">Format Painter</span>
<span class="t" style="left:298.80px;top:155.00px;font-size:17.6px;line-height:20px;color:#FFFFFF;letter-spacing:-0.080px;">Tahoma</span>
<span class="t" style="left:481.40px;top:155.00px;font-size:17.6px;line-height:20px;color:#FFFFFF;letter-spacing:-0.211px;">8</span>
<span class="t" style="left:554.00px;top:148.00px;font-size:26.5px;line-height:30px;color:#D6D6D6;letter-spacing:-0.318px;">A</span>
<span class="t" style="left:596.00px;top:152.00px;font-size:21.8px;line-height:25px;color:#D6D6D6;letter-spacing:-0.262px;">A</span>
<span class="t" style="left:306.50px;top:200.00px;font-size:20px;line-height:22px;color:#D6D6D6;font-weight:700;letter-spacing:-0.240px;">B</span>
<span class="t" style="left:349.50px;top:199.00px;font-size:21px;line-height:24px;color:#D6D6D6;font-family:'Liberation Serif', serif;font-style:italic;">I</span>
<span class="t" style="left:382.40px;top:199.00px;font-size:19.5px;line-height:22px;color:#D6D6D6;letter-spacing:-0.234px;">U</span>
<span class="t" style="left:575.30px;top:196.00px;font-size:22.3px;line-height:25px;color:#D6D6D6;letter-spacing:-0.268px;">A</span>
<span class="t" style="left:771.50px;top:156.00px;font-size:16px;line-height:17px;color:#D6D6D6;letter-spacing:-0.192px;transform:rotate(-45deg);transform-origin:0 100%;">ab</span>
<span class="t" style="left:870.60px;top:152.00px;font-size:12.5px;line-height:14px;color:#D6D6D6;letter-spacing:-0.300px;">ab</span>
<span class="t" style="left:870.80px;top:163.00px;font-size:12.5px;line-height:14px;color:#D6D6D6;letter-spacing:-0.150px;">c</span>
<span class="t" style="left:897.50px;top:155.00px;font-size:17.6px;line-height:20px;color:#FFFFFF;letter-spacing:-0.162px;">Wrap Text</span>
<span class="t" style="left:896.50px;top:203.00px;font-size:17.6px;line-height:20px;color:#FFFFFF;letter-spacing:0.200px;">Merge &amp; Center</span>
<span class="t" style="left:1098.50px;top:155.00px;font-size:17.6px;line-height:20px;color:#FFFFFF;letter-spacing:-0.483px;">General</span>
<span class="t" style="left:1107.80px;top:199.00px;font-size:23.5px;line-height:26px;color:#D6D6D6;letter-spacing:-0.282px;">$</span>
<span class="t" style="left:1163.10px;top:197.00px;font-size:28px;line-height:31px;color:#D6D6D6;letter-spacing:-0.336px;transform:scaleX(0.9);">%</span>
<span class="t" style="left:1255.50px;top:199.00px;font-size:12.6px;line-height:14px;color:#D6D6D6;letter-spacing:2.400px;">.0</span>
<span class="t" style="left:1247.50px;top:212.00px;font-size:12.6px;line-height:14px;color:#D6D6D6;letter-spacing:1.700px;">.00</span>
<span class="t" style="left:1286.30px;top:199.00px;font-size:12.6px;line-height:14px;color:#D6D6D6;letter-spacing:1.700px;">.00</span>
<span class="t" style="left:1294.30px;top:212.00px;font-size:12.6px;line-height:14px;color:#D6D6D6;letter-spacing:2.400px;">.0</span>
<span class="t" style="left:1346.00px;top:194.00px;font-size:17.6px;line-height:20px;color:#FFFFFF;letter-spacing:0.200px;">Insert</span>
<span class="t" style="left:1408.80px;top:194.00px;font-size:17.6px;line-height:20px;color:#FFFFFF;letter-spacing:0.040px;">Delete</span>
<span class="t" style="left:1471.80px;top:192.00px;font-size:17.6px;line-height:20px;color:#FFFFFF;letter-spacing:0.240px;">Format</span>
<span class="t" style="left:1593.00px;top:142.00px;font-size:17.6px;line-height:20px;color:#FFFFFF;letter-spacing:0.217px;">AutoSum</span>
<span class="t" style="left:1592.70px;top:182.00px;font-size:17.6px;line-height:20px;color:#FFFFFF;letter-spacing:-0.100px;">Fill</span>
<span class="t" style="left:1592.50px;top:221.00px;font-size:17.6px;line-height:20px;color:#FFFFFF;letter-spacing:-0.500px;">Clear</span>
<span class="t" style="left:1730.00px;top:136.00px;font-size:26px;line-height:30px;color:#4BA3E8;letter-spacing:-0.312px;transform:scaleX(0.82);">A</span>
<span class="t" style="left:1729.48px;top:159.00px;font-size:25.5px;line-height:28px;color:#D6D6D6;letter-spacing:-0.306px;transform:scaleX(0.82);">Z</span>
<span class="t" style="left:1724.40px;top:192.00px;font-size:17.6px;line-height:20px;color:#FFFFFF;letter-spacing:0.720px;">Sort &amp;</span>
<span class="t" style="left:1723.80px;top:216.00px;font-size:17.6px;line-height:20px;color:#FFFFFF;letter-spacing:-0.100px;">Filter</span>
<span class="t" style="left:1794.40px;top:192.00px;font-size:17.6px;line-height:20px;color:#FFFFFF;letter-spacing:0.520px;">Find &amp;</span>
<span class="t" style="left:1789.80px;top:216.00px;font-size:17.6px;line-height:20px;color:#FFFFFF;letter-spacing:-0.560px;">Select</span>
<span class="t" style="left:1885.00px;top:192.00px;font-size:17.6px;line-height:20px;color:#FFFFFF;letter-spacing:0.500px;">Add-ins</span>
<span class="t" style="left:1980.00px;top:192.00px;font-size:17.6px;line-height:20px;color:#FFFFFF;letter-spacing:-0.167px;">Analyze</span>
<span class="t" style="left:1991.80px;top:216.00px;font-size:17.6px;line-height:20px;color:#FFFFFF;letter-spacing:-0.167px;">Data</span>
<span class="t" style="left:2291.10px;top:153.00px;font-size:49.5px;line-height:55px;color:#FFFFFF;font-weight:700;-webkit-text-stroke:1.300px #fff;"><span class="g" style="margin-left:1.32px;transform:scaleX(0.892)">F</span><span class="g" style="margin-left:26.18px;transform:scaleX(1.000)">I</span><span class="g" style="margin-left:13.56px;transform:scaleX(1.013)">N</span><span class="g" style="margin-left:35.36px;transform:scaleX(1.126)">M</span><span class="g" style="margin-left:44.45px;transform:scaleX(1.014)">O</span><span class="g" style="margin-left:37.95px;transform:scaleX(0.994)">D</span><span class="g" style="margin-left:36.15px;transform:scaleX(0.743)">E</span><span class="g" style="margin-left:24.04px;transform:scaleX(0.796)">L</span><span class="g" style="margin-left:22.65px;transform:scaleX(0.921)">S</span><span class="g" style="margin-left:31.47px;transform:scaleX(0.823)">L</span><span class="g" style="margin-left:20.71px;transform:scaleX(1.058)">A</span><span class="g" style="margin-left:36.57px;transform:scaleX(0.897)">B</span></span>
<span class="t" style="left:2291.10px;top:205.00px;font-size:35px;line-height:39px;color:#FFFFFF;-webkit-text-stroke:0.300px #fff;"><span class="g" style="margin-left:2.88px;transform:scaleX(1.125)">T</span><span class="g" style="margin-left:42.90px;transform:scaleX(1.124)">e</span><span class="g" style="margin-left:43.26px;transform:scaleX(1.180)">m</span><span class="g" style="margin-left:55.45px;transform:scaleX(1.256)">p</span><span class="g" style="margin-left:45.26px;transform:scaleX(1.075)">l</span><span class="g" style="margin-left:29.97px;transform:scaleX(0.984)">a</span><span class="g" style="margin-left:43.18px;transform:scaleX(1.200)">t</span><span class="g" style="margin-left:34.81px;transform:scaleX(1.188)">e</span><span class="g" style="margin-left:43.63px;transform:scaleX(1.160)">s</span></span>
<span class="t" style="left:190.00px;top:1685.00px;font-size:19.4px;line-height:22px;color:#FFFFFF;letter-spacing:0.686px;">Contents</span>
<span class="t" style="left:314.00px;top:1685.00px;font-size:19.4px;line-height:22px;color:#141414;letter-spacing:0.575px;">Dashboard</span>
<span class="t" style="left:454.50px;top:1685.00px;font-size:19.4px;line-height:22px;color:#141414;letter-spacing:0.100px;">Revenue</span>
<span class="t" style="left:572.00px;top:1685.00px;font-size:19.4px;line-height:22px;color:#141414;letter-spacing:-0.180px;">COGS &amp; OPEX</span>
<span class="t" style="left:743.50px;top:1685.00px;font-size:19.4px;line-height:22px;color:#141414;letter-spacing:0.417px;">Payroll</span>
<span class="t" style="left:945.60px;top:1685.00px;font-size:19.4px;line-height:22px;color:#141414;letter-spacing:0.514px;">CapTable</span>
<span class="t" style="left:1071.00px;top:1685.00px;font-size:19.4px;line-height:22px;color:#141414;letter-spacing:0.533px;">Capital</span>
<span class="t" style="left:1173.50px;top:1685.00px;font-size:19.4px;line-height:22px;color:#141414;letter-spacing:-2.300px;">IS</span>
<span class="t" style="left:1229.30px;top:1685.00px;font-size:19.4px;line-height:22px;color:#141414;letter-spacing:-2.500px;">CF</span>
<span class="t" style="left:1290.60px;top:1685.00px;font-size:19.4px;line-height:22px;color:#141414;letter-spacing:-2.500px;">BS</span>
<span class="t" style="left:1351.50px;top:1685.00px;font-size:19.4px;line-height:22px;color:#141414;">Scenarios</span>
<span class="t" style="left:1480.70px;top:1685.00px;font-size:19.4px;line-height:22px;color:#141414;letter-spacing:0.713px;">Valuation</span>
<span class="t" style="left:1608.00px;top:1685.00px;font-size:19.4px;line-height:22px;color:#141414;letter-spacing:0.500px;">Summary</span>
<span class="t" style="left:1734.60px;top:1685.00px;font-size:19.4px;line-height:22px;color:#141414;letter-spacing:-2.500px;">BE</span>
<span class="t" style="left:1795.50px;top:1685.00px;font-size:19.4px;line-height:22px;color:#141414;letter-spacing:-1.133px;">ROIC</span>
<span class="t" style="left:1880.70px;top:1685.00px;font-size:19.4px;line-height:22px;color:#141414;letter-spacing:-0.040px;">Charts</span>
<span class="t" style="left:1978.50px;top:1685.00px;font-size:19.4px;line-height:22px;color:#141414;letter-spacing:-1.133px;">KPIs</span>
<span class="t" style="left:843.80px;top:1680.00px;font-size:19.4px;line-height:22px;color:#1A1A1A;letter-spacing:-0.550px;-webkit-text-stroke:0.25px;">CAPEX</span>
<span class="t" style="left:26.40px;top:1726.00px;font-size:15.6px;line-height:17px;color:#F0F0F0;letter-spacing:-0.450px;">Ready</span>
<span class="t" style="left:173.50px;top:1726.00px;font-size:15.6px;line-height:17px;color:#FFFFFF;font-weight:700;letter-spacing:0.052px;">Accessibility: Investigate</span>
<span class="t" style="left:2839.00px;top:1727.00px;font-size:15.6px;line-height:17px;color:#F0F0F0;letter-spacing:-0.067px;">140%</span>
<div style="left:53px;top:513.5px;width:2808px;height:1.2px;background:#A6A6A6;"></div>
<div style="left:1766.8px;top:305px;width:1.2px;height:1365px;background:rgba(110,110,110,0.62);"></div>
<div style="left:2425.4px;top:153.5px;width:12.6px;height:24px;background:#292929;"></div>
<div style="left:2427.4px;top:154.8px;width:8.4px;height:27px;background:#FFFFFF;border-radius:4.200px;"></div>
</div>
</body>
</html>
